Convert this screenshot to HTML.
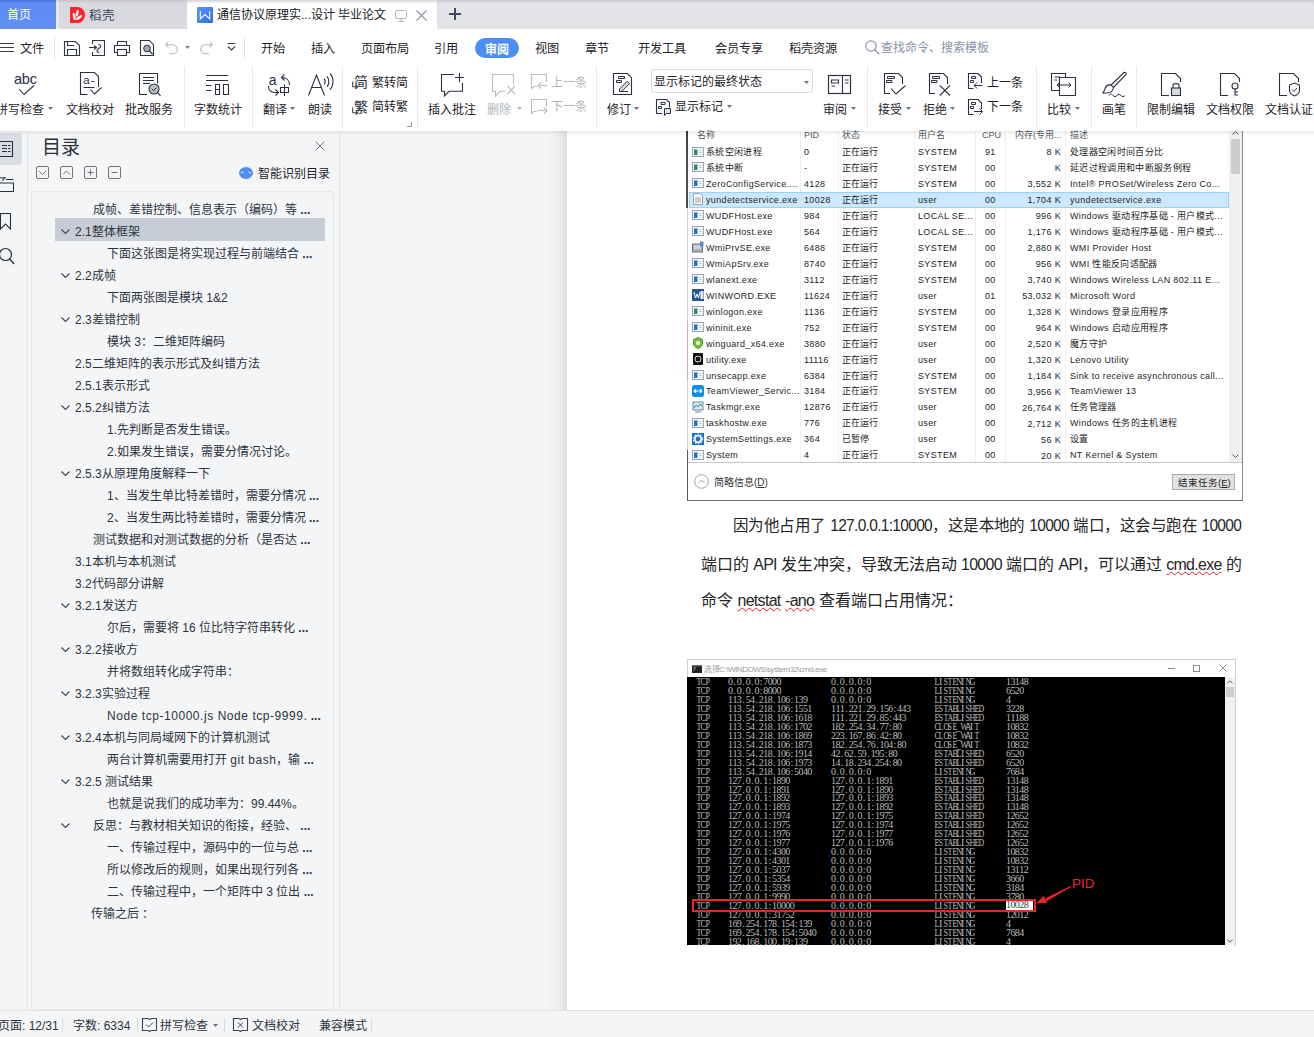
<!DOCTYPE html><html lang="zh-CN"><head><meta charset="utf-8"><style>
*{box-sizing:border-box;margin:0;padding:0}
html,body{width:1314px;height:1037px;overflow:hidden;background:#fff}
body{font-family:"Liberation Sans",sans-serif;color:#1f2329;position:relative}
.a{position:absolute;white-space:nowrap}
svg{position:absolute;overflow:visible}
</style></head><body>
<div class="a" style="left:0px;top:0px;width:1314px;height:29px;background:linear-gradient(#c8cacf,#dfe0e4 3px,#e3e4e8 6px)"></div>
<div class="a" style="left:0px;top:0px;width:56px;height:29px;background:linear-gradient(#4a74d6,#5d8af2 3px,#618ef7)"></div>
<div class="a" style="left:7px;top:6.5px;font-size:12px;line-height:17px;color:#ffffff;">首页</div>
<div class="a" style="left:56px;top:0px;width:3px;height:29px;background:linear-gradient(#d0d1d4,#e9e9eb 3px,#ebebed)"></div>
<div class="a" style="left:59px;top:0px;width:128px;height:29px;background:linear-gradient(#c3c5ca,#d7d9de 3px,#d9dbe0)"></div>
<svg style="left:70px;top:7px" width="15" height="16" viewBox="0 0 15 16"><path d="M0 0H7.5A7.5 8 0 0 1 7.5 16H0Z" fill="#fe2230"/><ellipse cx="4.2" cy="9.4" rx="1.3" ry="3.6" transform="rotate(-10 4.2 9.4)" fill="#fff"/><ellipse cx="7.2" cy="6.3" rx="1.3" ry="3.5" transform="rotate(12 7.2 6.3)" fill="#fff"/><ellipse cx="9.1" cy="10.5" rx="1.3" ry="3.6" transform="rotate(52 9.1 10.5)" fill="#fff"/></svg>
<div class="a" style="left:89px;top:6.5px;font-size:12.5px;line-height:18px;color:#3b4252;">稻壳</div>
<div class="a" style="left:187px;top:0px;width:250px;height:29px;background:linear-gradient(#d2d3d6,#f7f7f8 3px,#fff 5px)"></div>
<svg style="left:197px;top:7px" width="16" height="16" viewBox="0 0 16 16"><defs><linearGradient id="wg" x1="0" y1="0" x2="1" y2="1"><stop offset="0" stop-color="#5a93f7"/><stop offset="1" stop-color="#2f6fe8"/></linearGradient></defs><rect x="0" y="0" width="16" height="16" rx="1" fill="url(#wg)"/><path d="M3.3 4V12L8 7.6L12.7 12V4" fill="none" stroke="#fff" stroke-width="1.1"/></svg>
<div class="a" style="left:217px;top:7.0px;font-size:12px;line-height:17px;color:#16181d;">通信协议原理实...设计 毕业论文</div>
<svg style="left:395px;top:10px" width="12" height="12" viewBox="0 0 12 12"><rect x="0.5" y="0.5" width="11" height="8" rx="1.2" fill="none" stroke="#aab3c3" stroke-width="1"/><path d="M6 8.5V11M3 11.5H9" stroke="#aab3c3" stroke-width="1"/></svg>
<svg style="left:416px;top:10px" width="11" height="11" viewBox="0 0 11 11"><path d="M0.5 0.5L10.5 10.5M10.5 0.5L0.5 10.5" stroke="#8b93a3" stroke-width="1.1"/></svg>
<svg style="left:449px;top:8px" width="12" height="12" viewBox="0 0 12 12"><path d="M6 0V12M0 6H12" stroke="#3e4a61" stroke-width="2"/></svg>
<svg style="left:0px;top:43px" width="14" height="10" viewBox="0 0 14 10"><path d="M0 0.5H14M0 4.5H14M0 8.5H14" stroke="#3a4050" stroke-width="1"/></svg>
<div class="a" style="left:20px;top:40.8px;font-size:12.2px;line-height:17px;color:#1f2329;">文件</div>
<div class="a" style="left:54px;top:36px;width:1px;height:24px;background:#e2e4e8"></div>
<svg style="left:64px;top:41px" width="16" height="15" viewBox="0 0 16 15"><path d="M0.5 0.5H11.5L15.5 4.5V14.5H0.5Z" fill="none" stroke="#2f3542" stroke-width="1.1"/><path d="M3.5 14.5V8.5H12.5V14.5M3.5 0.5V4.5H10" fill="none" stroke="#2f3542" stroke-width="1.1"/></svg>
<svg style="left:89px;top:40px" width="16" height="16" viewBox="0 0 16 16"><path d="M3.5 4V0.5H15.5V15.5H3.5V12" fill="none" stroke="#2f3542" stroke-width="1.1"/><path d="M0 7.5H7M5 5.5L7.5 7.5L5 9.5M9.5 4.5C12 4.5 12.5 7 10.5 8L8.5 9.5C7 11 8.5 13 10.5 12" fill="none" stroke="#2f3542" stroke-width="1.1"/></svg>
<svg style="left:114px;top:41px" width="16" height="15" viewBox="0 0 16 15"><path d="M3.5 4V0.5H12.5V4M3.5 11.5H0.5V4.5H15.5V11.5H12.5M3.5 8.5H12.5V14.5H3.5Z" fill="none" stroke="#2f3542" stroke-width="1.1"/></svg>
<svg style="left:140px;top:40px" width="15" height="16" viewBox="0 0 15 16"><path d="M13.5 5V15.5H0.5V0.5H9.5Z" fill="none" stroke="#2f3542" stroke-width="1.1"/><circle cx="7" cy="8.5" r="3.2" fill="#a4a9b3" stroke="#2f3542" stroke-width="1.1"/><path d="M9.5 11L12.5 14" stroke="#2f3542" stroke-width="1.2"/></svg>
<svg style="left:165px;top:41px" width="13" height="13" viewBox="0 0 13 13"><path d="M3 1L0.8 3.8L3.5 6.3M1 3.8H7.5C10 3.8 12.3 6 12.3 8.5C12.3 11 10 12.8 7.5 12.8H4" fill="none" stroke="#b4b8c0" stroke-width="1.1"/></svg>
<svg style="left:185px;top:46px" width="5" height="3" viewBox="0 0 5 3"><path d="M0 0H5L2.5 3Z" fill="#7b8190"/></svg>
<svg style="left:200px;top:41px" width="13" height="13" viewBox="0 0 13 13"><path d="M10 1L12.2 3.8L9.5 6.3M12 3.8H5.5C3 3.8 0.7 6 0.7 8.5C0.7 11 3 12.8 5.5 12.8H9" fill="none" stroke="#b4b8c0" stroke-width="1.1"/></svg>
<svg style="left:227px;top:43px" width="9" height="9" viewBox="0 0 9 9"><path d="M0.5 0.5H8.5M1 3.5L4.5 7L8 3.5" fill="none" stroke="#3a4050" stroke-width="1.1"/></svg>
<div class="a" style="left:244px;top:36px;width:1px;height:24px;background:#e2e4e8"></div>
<div class="a" style="left:261px;top:40.8px;font-size:12.2px;line-height:17px;color:#1f2329;">开始</div>
<div class="a" style="left:311px;top:40.8px;font-size:12.2px;line-height:17px;color:#1f2329;">插入</div>
<div class="a" style="left:361px;top:40.8px;font-size:12.2px;line-height:17px;color:#1f2329;">页面布局</div>
<div class="a" style="left:434px;top:40.8px;font-size:12.2px;line-height:17px;color:#1f2329;">引用</div>
<div class="a" style="left:535px;top:40.8px;font-size:12.2px;line-height:17px;color:#1f2329;">视图</div>
<div class="a" style="left:585px;top:40.8px;font-size:12.2px;line-height:17px;color:#1f2329;">章节</div>
<div class="a" style="left:638px;top:40.8px;font-size:12.2px;line-height:17px;color:#1f2329;">开发工具</div>
<div class="a" style="left:715px;top:40.8px;font-size:12.2px;line-height:17px;color:#1f2329;">会员专享</div>
<div class="a" style="left:789px;top:40.8px;font-size:12.2px;line-height:17px;color:#1f2329;">稻壳资源</div>
<div class="a" style="left:475px;top:38px;width:44px;height:20px;background:#4d8ef6;border-radius:10px"></div>
<div class="a" style="left:485px;top:41.5px;font-size:12px;line-height:17px;color:#ffffff;font-weight:bold">审阅</div>
<svg style="left:865px;top:40px" width="15" height="15" viewBox="0 0 15 15"><circle cx="6" cy="6" r="5.2" fill="none" stroke="#8d96a8" stroke-width="1.2"/><path d="M9.8 9.8L14 14" stroke="#8d96a8" stroke-width="1.3"/></svg>
<div class="a" style="left:881px;top:40.0px;font-size:12px;line-height:17px;color:#8a93a5;">查找命令、搜索模板</div>
<div class="a" style="left:184px;top:66px;width:1px;height:62px;background:#e8e9ec"></div>
<div class="a" style="left:252px;top:66px;width:1px;height:62px;background:#e8e9ec"></div>
<div class="a" style="left:342px;top:66px;width:1px;height:62px;background:#e8e9ec"></div>
<div class="a" style="left:417px;top:66px;width:1px;height:62px;background:#e8e9ec"></div>
<div class="a" style="left:596px;top:66px;width:1px;height:62px;background:#e8e9ec"></div>
<div class="a" style="left:867px;top:66px;width:1px;height:62px;background:#e8e9ec"></div>
<div class="a" style="left:1036px;top:66px;width:1px;height:62px;background:#e8e9ec"></div>
<div class="a" style="left:1091px;top:66px;width:1px;height:62px;background:#e8e9ec"></div>
<div class="a" style="left:1136px;top:66px;width:1px;height:62px;background:#e8e9ec"></div>
<svg style="left:14px;top:70px" width="24" height="26" viewBox="0 0 24 26"><text x="0" y="13.8" font-family="Liberation Sans" font-size="14.5" fill="#2b3140" letter-spacing="-0.2">abc</text><path d="M5 19L10 24.5L20 15.5" fill="none" stroke="#2b3140" stroke-width="1.1"/></svg>
<div class="a" style="left:-4px;top:101.5px;font-size:12px;line-height:17px;color:#1f2329;">拼写检查</div>
<svg style="left:48px;top:106.5px" width="5" height="3" viewBox="0 0 5 3"><path d="M0 0H5L2.5 3Z" fill="#6b7280"/></svg>
<svg style="left:80px;top:72px" width="23" height="24" viewBox="0 0 23 24"><path d="M7.5 22.5H0.5V0.5H14.5L18.5 4.5V15" fill="none" stroke="#2b3140" stroke-width="1.1"/><path d="M10.5 17.5L14.5 22L21.5 15.5" fill="none" stroke="#2b3140" stroke-width="1.1"/><path d="M3.5 15.5H14.5" stroke="#2b3140" stroke-width="1"/><text x="3.2" y="12.3" font-family="Liberation Sans" font-size="11.5" fill="#2b3140">a</text><path d="M11.5 9.5H14.5" stroke="#2b3140" stroke-width="1"/></svg>
<div class="a" style="left:66px;top:101.5px;font-size:12px;line-height:17px;color:#1f2329;">文档校对</div>
<svg style="left:139px;top:73px" width="22" height="24" viewBox="0 0 22 24"><path d="M8 21.5H0.5V0.5H18.5V10.5" fill="none" stroke="#2b3140" stroke-width="1.1"/><path d="M4 4.5H15M4 7.5H15M4 10.5H11" stroke="#2b3140" stroke-width="1"/><circle cx="15" cy="16" r="5" fill="#b9bdc5" stroke="#2b3140" stroke-width="1.1"/><path d="M12.8 16L14.5 17.7L17.3 14.8" fill="none" stroke="#2b3140" stroke-width="1"/><path d="M18.7 19.7L21.5 22.8" stroke="#2b3140" stroke-width="1.2"/></svg>
<div class="a" style="left:125px;top:101.5px;font-size:12px;line-height:17px;color:#1f2329;">批改服务</div>
<svg style="left:205px;top:73px" width="25" height="23" viewBox="0 0 25 23"><path d="M1 2.5H23M1 7.5H23M1 12.5H6.5M1 17.5H6.5" stroke="#2b3140" stroke-width="1.1"/><path d="M10.5 11.5H14.5V21.5H10.5ZM10.5 16.5H14.5M18.5 11.5H23.5V21.5H18.5Z" fill="none" stroke="#2b3140" stroke-width="1.1"/></svg>
<div class="a" style="left:194px;top:101.5px;font-size:12px;line-height:17px;color:#1f2329;">字数统计</div>
<svg style="left:268px;top:73px" width="23" height="23" viewBox="0 0 23 23"><text x="0.8" y="11.5" font-family="Liberation Sans" font-size="14" fill="#2b3140">a</text><path d="M21.5 12C21.5 7.5 18.5 4.5 14 4.5M16.5 1.5L13.5 4.5L16.5 7.5" fill="none" stroke="#2b3140" stroke-width="1.1"/><path d="M0.5 13C0.5 17 3 19.5 7 19.5H10M7.5 16.5L10.5 19.5L7.5 22.5" fill="none" stroke="#2b3140" stroke-width="1.1"/><path d="M12.5 14.5H20.5V19.5H12.5ZM16.5 11.5V23" fill="none" stroke="#2b3140" stroke-width="1.1"/></svg>
<div class="a" style="left:263px;top:101.5px;font-size:12px;line-height:17px;color:#1f2329;">翻译</div>
<svg style="left:290px;top:106.5px" width="5" height="3" viewBox="0 0 5 3"><path d="M0 0H5L2.5 3Z" fill="#6b7280"/></svg>
<svg style="left:308px;top:72px" width="25" height="24" viewBox="0 0 25 24"><path d="M0.5 23.5L8.5 3L16.5 23.5M4 15.5H13" fill="none" stroke="#2b3140" stroke-width="1.1"/><path d="M16 6.5C17.5 8 17.5 11 16 12.5M19 4.5C21.5 7 21.5 12 19 14.5M22 1.5C26 5.5 26 13.5 22 17.5" fill="none" stroke="#2b3140" stroke-width="1.1"/></svg>
<div class="a" style="left:308px;top:101.5px;font-size:12px;line-height:17px;color:#1f2329;">朗读</div>
<div class="a" style="left:354px;top:71.5px;font-size:14px;line-height:20px;color:#2b3140;">简</div>
<div class="a" style="left:354px;top:96.5px;font-size:14px;line-height:20px;color:#2b3140;">繁</div>
<svg style="left:351.5px;top:80.5px" width="7" height="8" viewBox="0 0 7 8"><path d="M0.7 0.5V5.8H5.8M3.8 3.6L5.9 5.8L3.8 8" fill="none" stroke="#2b3140" stroke-width="1"/></svg>
<svg style="left:351.5px;top:106.5px" width="7" height="8" viewBox="0 0 7 8"><path d="M0.7 0.5V5.8H5.8M3.8 3.6L5.9 5.8L3.8 8" fill="none" stroke="#2b3140" stroke-width="1"/></svg>
<div class="a" style="left:372px;top:74.5px;font-size:12px;line-height:17px;color:#1f2329;">繁转简</div>
<div class="a" style="left:372px;top:99.0px;font-size:12px;line-height:17px;color:#1f2329;">简转繁</div>
<svg style="left:407px;top:122px" width="5" height="5" viewBox="0 0 5 5"><path d="M4.5 0V4.5H0" fill="none" stroke="#8a93a8" stroke-width="1"/></svg>
<svg style="left:441px;top:72px" width="24" height="25" viewBox="0 0 24 25"><path d="M12.9 2.5H0.5V19.3H3.5V24L8 19.3H21.5V11" fill="none" stroke="#2b3140" stroke-width="1.1"/><path d="M18.5 1V10M14 5.5H23" stroke="#2b3140" stroke-width="1.1"/></svg>
<div class="a" style="left:428px;top:101.5px;font-size:12px;line-height:17px;color:#1f2329;">插入批注</div>
<svg style="left:492px;top:72px" width="24" height="25" viewBox="0 0 24 25"><path d="M21.5 12V2.5H0.5V19.3H3.5V24L8 19.3H13" fill="none" stroke="#b9bcc3" stroke-width="1.1"/><path d="M15.5 14L23 22M23 14L15.5 22" stroke="#b9bcc3" stroke-width="1.1"/></svg>
<div class="a" style="left:487px;top:101.5px;font-size:12px;line-height:17px;color:#b0b4bc;">删除</div>
<svg style="left:517px;top:106.5px" width="5" height="3" viewBox="0 0 5 3"><path d="M0 0H5L2.5 3Z" fill="#b0b4bc"/></svg>
<svg style="left:531px;top:74px" width="17" height="16" viewBox="0 0 17 16"><path d="M15.5 8V0.5H0.5V14.5L3 12.5H6" fill="none" stroke="#b9bcc3" stroke-width="1.1"/><path d="M7 11.5H16M7 11.5L10 8.5M7 11.5L10 14.5" fill="none" stroke="#b9bcc3" stroke-width="1.1"/></svg>
<div class="a" style="left:551px;top:74.5px;font-size:12px;line-height:17px;color:#b0b4bc;">上一条</div>
<svg style="left:531px;top:99px" width="17" height="16" viewBox="0 0 17 16"><path d="M15.5 8V0.5H0.5V14.5L3 12.5H6" fill="none" stroke="#b9bcc3" stroke-width="1.1"/><path d="M7 11.5H16M16 11.5L13 8.5M16 11.5L13 14.5" fill="none" stroke="#b9bcc3" stroke-width="1.1"/></svg>
<div class="a" style="left:551px;top:99.0px;font-size:12px;line-height:17px;color:#b0b4bc;">下一条</div>
<svg style="left:613px;top:73px" width="20" height="23" viewBox="0 0 20 23"><path d="M0.5 21.5V0.5H14.3L18.5 4.7V21.5Z" fill="none" stroke="#2b3140" stroke-width="1.1"/><path d="M5.5 3.5H11.5V5.5H5.5ZM3.5 7.5H8.5V9.5H3.5Z" fill="none" stroke="#2b3140" stroke-width="1"/><path d="M6.5 18.5V16L14.2 8.3L16.5 10.6L8.8 18.5Z" fill="#d8dadf" stroke="#2b3140" stroke-width="1"/><path d="M8.8 18.5H15" stroke="#2b3140" stroke-width="1"/></svg>
<div class="a" style="left:607px;top:101.5px;font-size:12px;line-height:17px;color:#1f2329;">修订</div>
<svg style="left:634px;top:106.5px" width="5" height="3" viewBox="0 0 5 3"><path d="M0 0H5L2.5 3Z" fill="#6b7280"/></svg>
<div class="a" style="left:651px;top:69px;width:162px;height:24px;border:1px solid #dcdee3;border-radius:3px;background:#fff"></div>
<div class="a" style="left:654px;top:73.5px;font-size:12px;line-height:17px;color:#1f2329;">显示标记的最终状态</div>
<svg style="left:804px;top:81px" width="5" height="3" viewBox="0 0 5 3"><path d="M0 0H5L2.5 3Z" fill="#6b7280"/></svg>
<svg style="left:656px;top:99px" width="16" height="17" viewBox="0 0 16 17"><path d="M6.5 14.5H0.5V0.5H10.5L13.5 3.5V8.5" fill="none" stroke="#2b3140" stroke-width="1.1"/><path d="M5 3.5H9V5.5H5ZM2.5 7.5H5.5V9.5H2.5Z" fill="none" stroke="#2b3140" stroke-width="1"/><path d="M8.5 9.5H14.5V14.5H10.5L8.5 16.5Z" fill="#e2e4e8" stroke="#2b3140" stroke-width="1"/></svg>
<div class="a" style="left:675px;top:99.0px;font-size:12px;line-height:17px;color:#1f2329;">显示标记</div>
<svg style="left:727px;top:104.5px" width="5" height="3" viewBox="0 0 5 3"><path d="M0 0H5L2.5 3Z" fill="#6b7280"/></svg>
<svg style="left:828px;top:75px" width="23" height="19" viewBox="0 0 23 19"><rect x="0.5" y="0.5" width="22" height="18" fill="none" stroke="#2b3140" stroke-width="1.2"/><path d="M14.5 0.5V18.5M3.5 5H10.5V8H3.5ZM3.5 11H7M17 5H20.5M17 8H20.5" fill="none" stroke="#2b3140" stroke-width="1.1"/></svg>
<div class="a" style="left:823px;top:101.5px;font-size:12px;line-height:17px;color:#1f2329;">审阅</div>
<svg style="left:851px;top:106.5px" width="5" height="3" viewBox="0 0 5 3"><path d="M0 0H5L2.5 3Z" fill="#6b7280"/></svg>
<svg style="left:884px;top:73px" width="23" height="23" viewBox="0 0 23 23"><path d="M6 20.5H0.5V0.5H14.5L18.5 4.5V11" fill="none" stroke="#2b3140" stroke-width="1.1"/><path d="M3.5 3.5H10.5V5.5H3.5ZM2.5 7.5H8V9.5H2.5Z" fill="none" stroke="#2b3140" stroke-width="1"/><path d="M7 15.5L12 21L21.5 12.5" fill="none" stroke="#2b3140" stroke-width="1.1"/></svg>
<div class="a" style="left:878px;top:101.5px;font-size:12px;line-height:17px;color:#1f2329;">接受</div>
<svg style="left:906px;top:106.5px" width="5" height="3" viewBox="0 0 5 3"><path d="M0 0H5L2.5 3Z" fill="#6b7280"/></svg>
<svg style="left:929px;top:73px" width="23" height="23" viewBox="0 0 23 23"><path d="M6 20.5H0.5V0.5H14.5L18.5 4.5V11" fill="none" stroke="#2b3140" stroke-width="1.1"/><path d="M3.5 3.5H10.5V5.5H3.5ZM2.5 7.5H8V9.5H2.5Z" fill="none" stroke="#2b3140" stroke-width="1"/><path d="M10.8 12.3L21 22.5M21 12.3L10.8 22.5" fill="none" stroke="#2b3140" stroke-width="1.1"/></svg>
<div class="a" style="left:923px;top:101.5px;font-size:12px;line-height:17px;color:#1f2329;">拒绝</div>
<svg style="left:950px;top:106.5px" width="5" height="3" viewBox="0 0 5 3"><path d="M0 0H5L2.5 3Z" fill="#6b7280"/></svg>
<svg style="left:968px;top:73px" width="16" height="17" viewBox="0 0 16 17"><path d="M5.5 15.5H0.5V0.5H10L13.5 4V10" fill="none" stroke="#2b3140" stroke-width="1.1"/><path d="M3.5 3.5H7.5V5.5H3.5ZM2.5 7.5H5.5V9.5H2.5Z" fill="none" stroke="#2b3140" stroke-width="1"/><path d="M6 12.5H14.5M9 9.5L6 12.5L9 15.5" fill="none" stroke="#2b3140" stroke-width="1"/></svg>
<div class="a" style="left:987px;top:74.5px;font-size:12px;line-height:17px;color:#1f2329;">上一条</div>
<svg style="left:968px;top:99px" width="16" height="17" viewBox="0 0 16 17"><path d="M5.5 15.5H0.5V0.5H10L13.5 4V10" fill="none" stroke="#2b3140" stroke-width="1.1"/><path d="M3.5 3.5H7.5V5.5H3.5ZM2.5 7.5H5.5V9.5H2.5Z" fill="none" stroke="#2b3140" stroke-width="1"/><path d="M6 12.5H14.5M11.5 9.5L14.5 12.5L11.5 15.5" fill="none" stroke="#2b3140" stroke-width="1"/></svg>
<div class="a" style="left:987px;top:99.0px;font-size:12px;line-height:17px;color:#1f2329;">下一条</div>
<svg style="left:1051px;top:73px" width="25" height="23" viewBox="0 0 25 23"><path d="M0.5 17.5V0.5H14.5V4.5M0.5 17.5H8.5" fill="none" stroke="#2b3140" stroke-width="1.1"/><path d="M8.5 4.5H24.5V22.5H8.5Z" fill="none" stroke="#2b3140" stroke-width="1.1"/><path d="M3.5 4H9M3.5 7H6M6 12H20M6 12L8.5 9.5M6 12L8.5 14.5M20 12L17.5 9.5M20 12L17.5 14.5" fill="none" stroke="#2b3140" stroke-width="1"/></svg>
<div class="a" style="left:1047px;top:101.5px;font-size:12px;line-height:17px;color:#1f2329;">比较</div>
<svg style="left:1075px;top:106.5px" width="5" height="3" viewBox="0 0 5 3"><path d="M0 0H5L2.5 3Z" fill="#6b7280"/></svg>
<svg style="left:1102px;top:72px" width="25" height="25" viewBox="0 0 25 25"><path d="M9 13L22 0.5C23.5 0 24.5 1 24 2.5L11.5 15.5Z" fill="none" stroke="#2b3140" stroke-width="1.1"/><path d="M9 13C6 12.5 3.5 14 3 17L1 21H5C8.5 21 11 18.5 11.5 15.5" fill="none" stroke="#2b3140" stroke-width="1.1"/><path d="M7 23.5C8.5 21.5 9.5 21.5 11 23.5C12.5 25 13.5 25 15 23.5C16.5 22 17.5 22 19 23.5C20.5 25 21.5 25 23 23.5" fill="none" stroke="#2b3140" stroke-width="1"/></svg>
<div class="a" style="left:1102px;top:101.5px;font-size:12px;line-height:17px;color:#1f2329;">画笔</div>
<svg style="left:1161px;top:73px" width="20" height="23" viewBox="0 0 20 23"><path d="M8 22.5H0.5V0.5H14.5L19.5 5.5V9" fill="none" stroke="#2b3140" stroke-width="1.1"/><rect x="10.5" y="15" width="9" height="7.5" fill="#d8dadf" stroke="#2b3140" stroke-width="1.1"/><path d="M12 15V12.5C12 10 18 10 18 12.5V15" fill="none" stroke="#2b3140" stroke-width="1.1"/></svg>
<div class="a" style="left:1147px;top:101.5px;font-size:12px;line-height:17px;color:#1f2329;">限制编辑</div>
<svg style="left:1220px;top:73px" width="20" height="23" viewBox="0 0 20 23"><path d="M8 22.5H0.5V0.5H14.5L19.5 5.5V9" fill="none" stroke="#2b3140" stroke-width="1.1"/><circle cx="15" cy="13" r="3" fill="none" stroke="#2b3140" stroke-width="1.1"/><path d="M15 16V22.5M15 19H18M15 22H18" fill="none" stroke="#2b3140" stroke-width="1.1"/></svg>
<div class="a" style="left:1206px;top:101.5px;font-size:12px;line-height:17px;color:#1f2329;">文档权限</div>
<svg style="left:1279px;top:73px" width="20" height="23" viewBox="0 0 20 23"><path d="M8 22.5H0.5V0.5H14.5L19.5 5.5V9" fill="none" stroke="#2b3140" stroke-width="1.1"/><path d="M10.5 12L15.5 10L20.5 12V17C20.5 20 18 22 15.5 23C13 22 10.5 20 10.5 17Z" fill="none" stroke="#2b3140" stroke-width="1.1"/><path d="M13 16.5L15 18.5L18 15" fill="none" stroke="#2b3140" stroke-width="1"/></svg>
<div class="a" style="left:1265px;top:101.5px;font-size:12px;line-height:17px;color:#1f2329;">文档认证</div>
<div class="a" style="left:0px;top:131px;width:567px;height:879px;background:#f4f5f7"></div>
<div class="a" style="left:548px;top:131px;width:19px;height:879px;background:linear-gradient(90deg,rgba(0,0,0,0),rgba(0,0,0,0.02) 35%,rgba(0,0,0,0.05) 70%,rgba(0,0,0,0.09))"></div>
<div class="a" style="left:27px;top:131px;width:1px;height:879px;background:#e1e3e7"></div>
<div class="a" style="left:0px;top:133px;width:22px;height:32px;background:#dadde3;border-radius:0 4px 4px 0"></div>
<svg style="left:0px;top:141px" width="14" height="16" viewBox="0 0 14 16"><path d="M-2 0.5H12.5V15.5H-2" fill="none" stroke="#2b3140" stroke-width="1.1"/><path d="M2 4.5H7M8 4.5H10.5M2 7.5H7M8 7.5H10.5M2 10.5H7M8 10.5H10.5" stroke="#2b3140" stroke-width="1"/></svg>
<svg style="left:0px;top:177px" width="14" height="15" viewBox="0 0 14 15"><path d="M0 0.8H5L2.2 3.6" fill="none" stroke="#2b3140" stroke-width="1.1"/><path d="M6 2.5H13.5" stroke="#2b3140" stroke-width="1.1"/><path d="M-2 6H13.5V14.5H-2" fill="none" stroke="#2b3140" stroke-width="1.1"/></svg>
<svg style="left:0px;top:213px" width="11" height="17" viewBox="0 0 11 17"><path d="M0.5 0.5H10.5V16L5.5 11L0.5 16Z" fill="none" stroke="#2b3140" stroke-width="1.1"/></svg>
<svg style="left:0px;top:248px" width="15" height="18" viewBox="0 0 15 18"><circle cx="5.5" cy="6.5" r="6" fill="none" stroke="#2b3140" stroke-width="1.2"/><path d="M9.8 11L14 16" stroke="#2b3140" stroke-width="1.3"/></svg>
<div class="a" style="left:339px;top:131px;width:1px;height:879px;background:#e1e3e7"></div>
<div class="a" style="left:42px;top:133.5px;font-size:19px;line-height:27px;color:#2a2f3a;">目录</div>
<svg style="left:315px;top:141px" width="10" height="10" viewBox="0 0 10 10"><path d="M0.5 0.5L9.5 9.5M9.5 0.5L0.5 9.5" stroke="#6f7581" stroke-width="1"/></svg>
<svg style="left:36px;top:166px" width="13" height="13" viewBox="0 0 13 13"><rect x="0.5" y="0.5" width="12" height="12" rx="1.5" fill="none" stroke="#707379" stroke-width="1"/><path d="M3 5L6.5 8.5L10 5" fill="none" stroke="#6f7277" stroke-width="1"/></svg>
<svg style="left:60px;top:166px" width="13" height="13" viewBox="0 0 13 13"><rect x="0.5" y="0.5" width="12" height="12" rx="1.5" fill="none" stroke="#707379" stroke-width="1"/><path d="M3 8.5L6.5 5L10 8.5" fill="none" stroke="#6f7277" stroke-width="1"/></svg>
<svg style="left:84px;top:166px" width="13" height="13" viewBox="0 0 13 13"><rect x="0.5" y="0.5" width="12" height="12" rx="1.5" fill="none" stroke="#707379" stroke-width="1"/><path d="M6.5 3.5V9.5M3.5 6.5H9.5" stroke="#6f7277" stroke-width="1"/></svg>
<svg style="left:108px;top:166px" width="13" height="13" viewBox="0 0 13 13"><rect x="0.5" y="0.5" width="12" height="12" rx="1.5" fill="none" stroke="#707379" stroke-width="1"/><path d="M3.5 6.5H9.5" stroke="#6f7277" stroke-width="1"/></svg>
<svg style="left:239px;top:166px" width="14" height="14" viewBox="0 0 14 14"><ellipse cx="7" cy="7" rx="7" ry="6" fill="#4d90f2"/><path d="M1.8 7.2L3.4 5.8L4.6 6.6M9.4 5.8L10.8 7L12.2 6.2" fill="none" stroke="#fff" stroke-width="1"/></svg>
<div class="a" style="left:258px;top:166.3px;font-size:12px;line-height:17px;color:#1f2329;">智能识别目录</div>
<div class="a" style="left:31px;top:191px;width:303px;height:819px;border:1px solid #e3e5e9;border-radius:3px"></div>
<div class="a" style="left:55px;top:218px;width:270px;height:23px;background:#c7cdd6"></div>
<div class="a" style="left:93px;top:201.8px;font-size:12px;line-height:17px;color:#2c3340;">成帧、差错控制、信息表示（编码）等 <b>...</b></div>
<svg style="left:61px;top:229.0px" width="9" height="5" viewBox="0 0 9 5"><path d="M0.5 0.5L4.5 4.5L8.5 0.5" fill="none" stroke="#3d4455" stroke-width="1.1"/></svg>
<div class="a" style="left:75px;top:223.8px;font-size:12px;line-height:17px;color:#2c3340;">2.1整体框架</div>
<div class="a" style="left:107px;top:245.8px;font-size:12px;line-height:17px;color:#2c3340;">下面这张图是将实现过程与前端结合 <b>...</b></div>
<svg style="left:61px;top:273.0px" width="9" height="5" viewBox="0 0 9 5"><path d="M0.5 0.5L4.5 4.5L8.5 0.5" fill="none" stroke="#3d4455" stroke-width="1.1"/></svg>
<div class="a" style="left:75px;top:267.8px;font-size:12px;line-height:17px;color:#2c3340;">2.2成帧</div>
<div class="a" style="left:107px;top:289.8px;font-size:12px;line-height:17px;color:#2c3340;">下面两张图是模块 1&amp;2</div>
<svg style="left:61px;top:317.0px" width="9" height="5" viewBox="0 0 9 5"><path d="M0.5 0.5L4.5 4.5L8.5 0.5" fill="none" stroke="#3d4455" stroke-width="1.1"/></svg>
<div class="a" style="left:75px;top:311.8px;font-size:12px;line-height:17px;color:#2c3340;">2.3差错控制</div>
<div class="a" style="left:107px;top:333.8px;font-size:12px;line-height:17px;color:#2c3340;">模块 3：二维矩阵编码</div>
<div class="a" style="left:75px;top:355.8px;font-size:12px;line-height:17px;color:#2c3340;">2.5二维矩阵的表示形式及纠错方法</div>
<div class="a" style="left:75px;top:377.8px;font-size:12px;line-height:17px;color:#2c3340;">2.5.1表示形式</div>
<svg style="left:61px;top:405.0px" width="9" height="5" viewBox="0 0 9 5"><path d="M0.5 0.5L4.5 4.5L8.5 0.5" fill="none" stroke="#3d4455" stroke-width="1.1"/></svg>
<div class="a" style="left:75px;top:399.8px;font-size:12px;line-height:17px;color:#2c3340;">2.5.2纠错方法</div>
<div class="a" style="left:107px;top:421.8px;font-size:12px;line-height:17px;color:#2c3340;">1.先判断是否发生错误。</div>
<div class="a" style="left:107px;top:443.8px;font-size:12px;line-height:17px;color:#2c3340;">2.如果发生错误，需要分情况讨论。</div>
<svg style="left:61px;top:471.0px" width="9" height="5" viewBox="0 0 9 5"><path d="M0.5 0.5L4.5 4.5L8.5 0.5" fill="none" stroke="#3d4455" stroke-width="1.1"/></svg>
<div class="a" style="left:75px;top:465.8px;font-size:12px;line-height:17px;color:#2c3340;">2.5.3从原理角度解释一下</div>
<div class="a" style="left:107px;top:487.8px;font-size:12px;line-height:17px;color:#2c3340;">1、当发生单比特差错时，需要分情况 <b>...</b></div>
<div class="a" style="left:107px;top:509.8px;font-size:12px;line-height:17px;color:#2c3340;">2、当发生两比特差错时，需要分情况 <b>...</b></div>
<div class="a" style="left:93px;top:531.8px;font-size:12px;line-height:17px;color:#2c3340;">测试数据和对测试数据的分析（是否达 <b>...</b></div>
<div class="a" style="left:75px;top:553.8px;font-size:12px;line-height:17px;color:#2c3340;">3.1本机与本机测试</div>
<div class="a" style="left:75px;top:575.8px;font-size:12px;line-height:17px;color:#2c3340;">3.2代码部分讲解</div>
<svg style="left:61px;top:603.0px" width="9" height="5" viewBox="0 0 9 5"><path d="M0.5 0.5L4.5 4.5L8.5 0.5" fill="none" stroke="#3d4455" stroke-width="1.1"/></svg>
<div class="a" style="left:75px;top:597.8px;font-size:12px;line-height:17px;color:#2c3340;">3.2.1发送方</div>
<div class="a" style="left:107px;top:619.8px;font-size:12px;line-height:17px;color:#2c3340;">尔后，需要将 16 位比特字符串转化 <b>...</b></div>
<svg style="left:61px;top:647.0px" width="9" height="5" viewBox="0 0 9 5"><path d="M0.5 0.5L4.5 4.5L8.5 0.5" fill="none" stroke="#3d4455" stroke-width="1.1"/></svg>
<div class="a" style="left:75px;top:641.8px;font-size:12px;line-height:17px;color:#2c3340;">3.2.2接收方</div>
<div class="a" style="left:107px;top:663.8px;font-size:12px;line-height:17px;color:#2c3340;">并将数组转化成字符串：</div>
<svg style="left:61px;top:691.0px" width="9" height="5" viewBox="0 0 9 5"><path d="M0.5 0.5L4.5 4.5L8.5 0.5" fill="none" stroke="#3d4455" stroke-width="1.1"/></svg>
<div class="a" style="left:75px;top:685.8px;font-size:12px;line-height:17px;color:#2c3340;">3.2.3实验过程</div>
<div class="a" style="left:107px;top:707.8px;font-size:12px;line-height:17px;color:#2c3340;"><span style="letter-spacing:0.55px">Node tcp-10000.js Node tcp-9999.</span> <b>...</b></div>
<svg style="left:61px;top:735.0px" width="9" height="5" viewBox="0 0 9 5"><path d="M0.5 0.5L4.5 4.5L8.5 0.5" fill="none" stroke="#3d4455" stroke-width="1.1"/></svg>
<div class="a" style="left:75px;top:729.8px;font-size:12px;line-height:17px;color:#2c3340;">3.2.4本机与同局域网下的计算机测试</div>
<div class="a" style="left:107px;top:751.8px;font-size:12px;line-height:17px;color:#2c3340;">两台计算机需要用打开 <span style="letter-spacing:0.5px">git bash</span>，输 <b>...</b></div>
<svg style="left:61px;top:779.0px" width="9" height="5" viewBox="0 0 9 5"><path d="M0.5 0.5L4.5 4.5L8.5 0.5" fill="none" stroke="#3d4455" stroke-width="1.1"/></svg>
<div class="a" style="left:75px;top:773.8px;font-size:12px;line-height:17px;color:#2c3340;">3.2.5 测试结果</div>
<div class="a" style="left:107px;top:795.8px;font-size:12px;line-height:17px;color:#2c3340;">也就是说我们的成功率为：99.44%。</div>
<svg style="left:61px;top:823.0px" width="9" height="5" viewBox="0 0 9 5"><path d="M0.5 0.5L4.5 4.5L8.5 0.5" fill="none" stroke="#3d4455" stroke-width="1.1"/></svg>
<div class="a" style="left:93px;top:817.8px;font-size:12px;line-height:17px;color:#2c3340;">反思：与教材相关知识的衔接，经验、 <b>...</b></div>
<div class="a" style="left:107px;top:839.8px;font-size:12px;line-height:17px;color:#2c3340;">一、传输过程中，源码中的一位与总 <b>...</b></div>
<div class="a" style="left:107px;top:861.8px;font-size:12px;line-height:17px;color:#2c3340;">所以修改后的规则，如果出现行列各 <b>...</b></div>
<div class="a" style="left:107px;top:883.8px;font-size:12px;line-height:17px;color:#2c3340;">二、传输过程中，一个矩阵中 3 位出 <b>...</b></div>
<div class="a" style="left:91px;top:905.8px;font-size:12px;line-height:17px;color:#2c3340;">传输之后 ：</div>
<div class="a" style="left:0px;top:1010px;width:1314px;height:27px;background:#f4f5f7;border-top:1px solid #e1e3e7"></div>
<div class="a" style="left:-2px;top:1017.5px;font-size:12px;line-height:17px;color:#2c3340;">页面: 12/31</div>
<div class="a" style="left:62px;top:1018px;width:1px;height:14px;background:#d9dbe0"></div>
<div class="a" style="left:73px;top:1017.5px;font-size:12px;line-height:17px;color:#2c3340;">字数: 6334</div>
<div class="a" style="left:137px;top:1018px;width:1px;height:14px;background:#d9dbe0"></div>
<svg style="left:142px;top:1018px" width="15" height="15" viewBox="0 0 15 15"><path d="M0.5 0.5H6L7.5 1.5L9 0.5H14.5V12.5H9L7.5 13.5L6 12.5H0.5Z" fill="none" stroke="#3d4455" stroke-width="1.1"/><path d="M4 6.5L6.5 9L11 4.5" fill="none" stroke="#3d4455" stroke-width="1"/></svg>
<div class="a" style="left:160px;top:1017.5px;font-size:12px;line-height:17px;color:#2c3340;">拼写检查</div>
<svg style="left:213px;top:1024px" width="5" height="3" viewBox="0 0 5 3"><path d="M0 0H5L2.5 3Z" fill="#6b7280"/></svg>
<div class="a" style="left:224px;top:1018px;width:1px;height:14px;background:#d9dbe0"></div>
<svg style="left:233px;top:1018px" width="15" height="15" viewBox="0 0 15 15"><path d="M0.5 0.5H6L7.5 1.5L9 0.5H14.5V12.5H9L7.5 13.5L6 12.5H0.5Z" fill="none" stroke="#3d4455" stroke-width="1.1"/><path d="M5 4.5L10 9.5M10 4.5L5 9.5" fill="none" stroke="#3d4455" stroke-width="1"/></svg>
<div class="a" style="left:252px;top:1017.5px;font-size:12px;line-height:17px;color:#2c3340;">文档校对</div>
<div class="a" style="left:319px;top:1017.5px;font-size:12px;line-height:17px;color:#2c3340;">兼容模式</div>
<div class="a" style="left:371px;top:1018px;width:1px;height:14px;background:#d9dbe0"></div>
<div class="a" style="left:567px;top:131px;width:747px;height:879px;background:#fff"></div>
<div class="a" style="left:687px;top:131px;width:1px;height:370px;background:#cfcfcf"></div>
<div class="a" style="left:686px;top:131px;width:2px;height:77px;background:linear-gradient(#3c3c3c,#5a4a4c 40%,#4a4a4a)"></div>
<div class="a" style="left:687px;top:321px;width:1px;height:58px;background:#e2a4ac"></div>
<div class="a" style="left:687px;top:450px;width:1px;height:51px;background:#5a5a5a"></div>
<div class="a" style="left:1242px;top:131px;width:1px;height:370px;background:#8a8a8a"></div>
<div class="a" style="left:687px;top:500px;width:556px;height:1px;background:#6a6a6a"></div>
<div class="a" style="left:697px;top:128.8px;font-size:9px;line-height:13px;color:#555a60;">名称</div>
<div class="a" style="left:804px;top:128.8px;font-size:9px;line-height:13px;color:#555a60;">PID</div>
<div class="a" style="left:842px;top:128.8px;font-size:9px;line-height:13px;color:#555a60;">状态</div>
<div class="a" style="left:918px;top:128.8px;font-size:9px;line-height:13px;color:#555a60;">用户名</div>
<div class="a" style="left:982px;top:128.8px;font-size:9px;line-height:13px;color:#555a60;">CPU</div>
<div class="a" style="left:1015px;top:128.8px;font-size:9px;line-height:13px;color:#555a60;">内存(专用...</div>
<div class="a" style="left:1070px;top:128.8px;font-size:9px;line-height:13px;color:#555a60;">描述</div>
<div class="a" style="left:800px;top:131px;width:1px;height:332px;background:#eef0f2"></div>
<div class="a" style="left:838px;top:131px;width:1px;height:332px;background:#eef0f2"></div>
<div class="a" style="left:914px;top:131px;width:1px;height:332px;background:#eef0f2"></div>
<div class="a" style="left:975px;top:131px;width:1px;height:332px;background:#eef0f2"></div>
<div class="a" style="left:1005px;top:131px;width:1px;height:332px;background:#eef0f2"></div>
<div class="a" style="left:1065px;top:131px;width:1px;height:332px;background:#eef0f2"></div>
<div class="a" style="left:1005px;top:131px;width:1px;height:332px;background:#eef0f2"></div>
<div class="a" style="left:689px;top:192px;width:540px;height:16px;background:#cce8ff;border:1px solid #99d1ff"></div>
<svg style="left:692px;top:146.5px" width="12" height="10" viewBox="0 0 12 10"><rect x="0.5" y="0.5" width="11" height="9" fill="#f4f6f8" stroke="#9aa3ad" stroke-width="1"/><rect x="2" y="2.5" width="3.5" height="5.5" fill="#2e8b7a"/><path d="M7 3.5H10M7 5.5H10" stroke="#b9c0c8" stroke-width="0.8"/></svg>
<div class="a" style="left:706px;top:145.9px;font-size:9px;line-height:13px;color:#1e1e1e;letter-spacing:0.35px">系统空闲进程</div>
<div class="a" style="left:804px;top:145.9px;font-size:9px;line-height:13px;color:#1e1e1e;letter-spacing:0.35px">0</div>
<div class="a" style="left:842px;top:145.9px;font-size:9px;line-height:13px;color:#1e1e1e;">正在运行</div>
<div class="a" style="left:918px;top:145.9px;font-size:9px;line-height:13px;color:#1e1e1e;letter-spacing:0.35px">SYSTEM</div>
<div class="a" style="left:985px;top:145.9px;font-size:9px;line-height:13px;color:#1e1e1e;letter-spacing:0.35px">91</div>
<div class="a" style="left:990px;width:71px;text-align:right;top:145.4px;font-size:9px;line-height:14px;color:#1e1e1e;letter-spacing:0.35px">8 K</div>
<div class="a" style="left:1070px;top:145.9px;font-size:9px;line-height:13px;color:#1e1e1e;letter-spacing:0.35px">处理器空闲时间百分比</div>
<svg style="left:692px;top:162.47px" width="12" height="10" viewBox="0 0 12 10"><rect x="0.5" y="0.5" width="11" height="9" fill="#f4f6f8" stroke="#9aa3ad" stroke-width="1"/><rect x="2" y="2.5" width="3.5" height="5.5" fill="#2e8b7a"/><path d="M7 3.5H10M7 5.5H10" stroke="#b9c0c8" stroke-width="0.8"/></svg>
<div class="a" style="left:706px;top:161.9px;font-size:9px;line-height:13px;color:#1e1e1e;letter-spacing:0.35px">系统中断</div>
<div class="a" style="left:804px;top:161.9px;font-size:9px;line-height:13px;color:#1e1e1e;letter-spacing:0.35px">-</div>
<div class="a" style="left:842px;top:161.9px;font-size:9px;line-height:13px;color:#1e1e1e;">正在运行</div>
<div class="a" style="left:918px;top:161.9px;font-size:9px;line-height:13px;color:#1e1e1e;letter-spacing:0.35px">SYSTEM</div>
<div class="a" style="left:985px;top:161.9px;font-size:9px;line-height:13px;color:#1e1e1e;letter-spacing:0.35px">00</div>
<div class="a" style="left:990px;width:71px;text-align:right;top:161.4px;font-size:9px;line-height:14px;color:#1e1e1e;letter-spacing:0.35px">K</div>
<div class="a" style="left:1070px;top:161.9px;font-size:9px;line-height:13px;color:#1e1e1e;letter-spacing:0.35px">延迟过程调用和中断服务例程</div>
<svg style="left:692px;top:178.44px" width="12" height="10" viewBox="0 0 12 10"><rect x="0.5" y="0.5" width="11" height="9" fill="#f4f6f8" stroke="#9aa3ad" stroke-width="1"/><rect x="2" y="2.5" width="3.5" height="5.5" fill="#1a73c8"/><path d="M7 3.5H10M7 5.5H10" stroke="#b9c0c8" stroke-width="0.8"/></svg>
<div class="a" style="left:706px;top:177.8px;font-size:9px;line-height:13px;color:#1e1e1e;letter-spacing:0.35px">ZeroConfigService....</div>
<div class="a" style="left:804px;top:177.8px;font-size:9px;line-height:13px;color:#1e1e1e;letter-spacing:0.35px">4128</div>
<div class="a" style="left:842px;top:177.8px;font-size:9px;line-height:13px;color:#1e1e1e;">正在运行</div>
<div class="a" style="left:918px;top:177.8px;font-size:9px;line-height:13px;color:#1e1e1e;letter-spacing:0.35px">SYSTEM</div>
<div class="a" style="left:985px;top:177.8px;font-size:9px;line-height:13px;color:#1e1e1e;letter-spacing:0.35px">00</div>
<div class="a" style="left:990px;width:71px;text-align:right;top:177.3px;font-size:9px;line-height:14px;color:#1e1e1e;letter-spacing:0.35px">3,552 K</div>
<div class="a" style="left:1070px;top:177.8px;font-size:9px;line-height:13px;color:#1e1e1e;letter-spacing:0.35px">Intel® PROSet/Wireless Zero Co...</div>
<svg style="left:693px;top:193.41px" width="10" height="12" viewBox="0 0 10 12"><path d="M0.5 0.5H7L9.5 3V11.5H0.5Z" fill="#fff" stroke="#9aa3ad"/><path d="M2 5H8M2 7H8M2 9H8" stroke="#7a8a9a" stroke-width="0.8"/></svg>
<div class="a" style="left:706px;top:193.8px;font-size:9px;line-height:13px;color:#1e1e1e;letter-spacing:0.35px">yundetectservice.exe</div>
<div class="a" style="left:804px;top:193.8px;font-size:9px;line-height:13px;color:#1e1e1e;letter-spacing:0.35px">10028</div>
<div class="a" style="left:842px;top:193.8px;font-size:9px;line-height:13px;color:#1e1e1e;">正在运行</div>
<div class="a" style="left:918px;top:193.8px;font-size:9px;line-height:13px;color:#1e1e1e;letter-spacing:0.35px">user</div>
<div class="a" style="left:985px;top:193.8px;font-size:9px;line-height:13px;color:#1e1e1e;letter-spacing:0.35px">00</div>
<div class="a" style="left:990px;width:71px;text-align:right;top:193.3px;font-size:9px;line-height:14px;color:#1e1e1e;letter-spacing:0.35px">1,704 K</div>
<div class="a" style="left:1070px;top:193.8px;font-size:9px;line-height:13px;color:#1e1e1e;letter-spacing:0.35px">yundetectservice.exe</div>
<svg style="left:692px;top:210.38px" width="12" height="10" viewBox="0 0 12 10"><rect x="0.5" y="0.5" width="11" height="9" fill="#f4f6f8" stroke="#9aa3ad" stroke-width="1"/><rect x="2" y="2.5" width="3.5" height="5.5" fill="#1a73c8"/><path d="M7 3.5H10M7 5.5H10" stroke="#b9c0c8" stroke-width="0.8"/></svg>
<div class="a" style="left:706px;top:209.8px;font-size:9px;line-height:13px;color:#1e1e1e;letter-spacing:0.35px">WUDFHost.exe</div>
<div class="a" style="left:804px;top:209.8px;font-size:9px;line-height:13px;color:#1e1e1e;letter-spacing:0.35px">984</div>
<div class="a" style="left:842px;top:209.8px;font-size:9px;line-height:13px;color:#1e1e1e;">正在运行</div>
<div class="a" style="left:918px;top:209.8px;font-size:9px;line-height:13px;color:#1e1e1e;letter-spacing:0.35px">LOCAL SE...</div>
<div class="a" style="left:985px;top:209.8px;font-size:9px;line-height:13px;color:#1e1e1e;letter-spacing:0.35px">00</div>
<div class="a" style="left:990px;width:71px;text-align:right;top:209.3px;font-size:9px;line-height:14px;color:#1e1e1e;letter-spacing:0.35px">996 K</div>
<div class="a" style="left:1070px;top:209.8px;font-size:9px;line-height:13px;color:#1e1e1e;letter-spacing:0.35px">Windows 驱动程序基础 - 用户模式...</div>
<svg style="left:692px;top:226.35000000000002px" width="12" height="10" viewBox="0 0 12 10"><rect x="0.5" y="0.5" width="11" height="9" fill="#f4f6f8" stroke="#9aa3ad" stroke-width="1"/><rect x="2" y="2.5" width="3.5" height="5.5" fill="#1a73c8"/><path d="M7 3.5H10M7 5.5H10" stroke="#b9c0c8" stroke-width="0.8"/></svg>
<div class="a" style="left:706px;top:225.8px;font-size:9px;line-height:13px;color:#1e1e1e;letter-spacing:0.35px">WUDFHost.exe</div>
<div class="a" style="left:804px;top:225.8px;font-size:9px;line-height:13px;color:#1e1e1e;letter-spacing:0.35px">564</div>
<div class="a" style="left:842px;top:225.8px;font-size:9px;line-height:13px;color:#1e1e1e;">正在运行</div>
<div class="a" style="left:918px;top:225.8px;font-size:9px;line-height:13px;color:#1e1e1e;letter-spacing:0.35px">LOCAL SE...</div>
<div class="a" style="left:985px;top:225.8px;font-size:9px;line-height:13px;color:#1e1e1e;letter-spacing:0.35px">00</div>
<div class="a" style="left:990px;width:71px;text-align:right;top:225.3px;font-size:9px;line-height:14px;color:#1e1e1e;letter-spacing:0.35px">1,176 K</div>
<div class="a" style="left:1070px;top:225.8px;font-size:9px;line-height:13px;color:#1e1e1e;letter-spacing:0.35px">Windows 驱动程序基础 - 用户模式...</div>
<svg style="left:692px;top:241.32px" width="12" height="12" viewBox="0 0 12 12"><rect x="0.5" y="3" width="10" height="8" fill="#aab4c0" stroke="#6a7480"/><path d="M2 5H9M2 7H9" stroke="#fff" stroke-width="0.8"/><rect x="8" y="0.5" width="3.5" height="5" fill="#5a8ac0"/></svg>
<div class="a" style="left:706px;top:241.7px;font-size:9px;line-height:13px;color:#1e1e1e;letter-spacing:0.35px">WmiPrvSE.exe</div>
<div class="a" style="left:804px;top:241.7px;font-size:9px;line-height:13px;color:#1e1e1e;letter-spacing:0.35px">6488</div>
<div class="a" style="left:842px;top:241.7px;font-size:9px;line-height:13px;color:#1e1e1e;">正在运行</div>
<div class="a" style="left:918px;top:241.7px;font-size:9px;line-height:13px;color:#1e1e1e;letter-spacing:0.35px">SYSTEM</div>
<div class="a" style="left:985px;top:241.7px;font-size:9px;line-height:13px;color:#1e1e1e;letter-spacing:0.35px">00</div>
<div class="a" style="left:990px;width:71px;text-align:right;top:241.2px;font-size:9px;line-height:14px;color:#1e1e1e;letter-spacing:0.35px">2,880 K</div>
<div class="a" style="left:1070px;top:241.7px;font-size:9px;line-height:13px;color:#1e1e1e;letter-spacing:0.35px">WMI Provider Host</div>
<svg style="left:692px;top:258.29px" width="12" height="10" viewBox="0 0 12 10"><rect x="0.5" y="0.5" width="11" height="9" fill="#f4f6f8" stroke="#9aa3ad" stroke-width="1"/><rect x="2" y="2.5" width="3.5" height="5.5" fill="#1a73c8"/><path d="M7 3.5H10M7 5.5H10" stroke="#b9c0c8" stroke-width="0.8"/></svg>
<div class="a" style="left:706px;top:257.7px;font-size:9px;line-height:13px;color:#1e1e1e;letter-spacing:0.35px">WmiApSrv.exe</div>
<div class="a" style="left:804px;top:257.7px;font-size:9px;line-height:13px;color:#1e1e1e;letter-spacing:0.35px">8740</div>
<div class="a" style="left:842px;top:257.7px;font-size:9px;line-height:13px;color:#1e1e1e;">正在运行</div>
<div class="a" style="left:918px;top:257.7px;font-size:9px;line-height:13px;color:#1e1e1e;letter-spacing:0.35px">SYSTEM</div>
<div class="a" style="left:985px;top:257.7px;font-size:9px;line-height:13px;color:#1e1e1e;letter-spacing:0.35px">00</div>
<div class="a" style="left:990px;width:71px;text-align:right;top:257.2px;font-size:9px;line-height:14px;color:#1e1e1e;letter-spacing:0.35px">956 K</div>
<div class="a" style="left:1070px;top:257.7px;font-size:9px;line-height:13px;color:#1e1e1e;letter-spacing:0.35px">WMI 性能反向适配器</div>
<svg style="left:692px;top:274.26px" width="12" height="10" viewBox="0 0 12 10"><rect x="0.5" y="0.5" width="11" height="9" fill="#f4f6f8" stroke="#9aa3ad" stroke-width="1"/><rect x="2" y="2.5" width="3.5" height="5.5" fill="#1a73c8"/><path d="M7 3.5H10M7 5.5H10" stroke="#b9c0c8" stroke-width="0.8"/></svg>
<div class="a" style="left:706px;top:273.7px;font-size:9px;line-height:13px;color:#1e1e1e;letter-spacing:0.35px">wlanext.exe</div>
<div class="a" style="left:804px;top:273.7px;font-size:9px;line-height:13px;color:#1e1e1e;letter-spacing:0.35px">3112</div>
<div class="a" style="left:842px;top:273.7px;font-size:9px;line-height:13px;color:#1e1e1e;">正在运行</div>
<div class="a" style="left:918px;top:273.7px;font-size:9px;line-height:13px;color:#1e1e1e;letter-spacing:0.35px">SYSTEM</div>
<div class="a" style="left:985px;top:273.7px;font-size:9px;line-height:13px;color:#1e1e1e;letter-spacing:0.35px">00</div>
<div class="a" style="left:990px;width:71px;text-align:right;top:273.2px;font-size:9px;line-height:14px;color:#1e1e1e;letter-spacing:0.35px">3,740 K</div>
<div class="a" style="left:1070px;top:273.7px;font-size:9px;line-height:13px;color:#1e1e1e;letter-spacing:0.35px">Windows Wireless LAN 802.11 E...</div>
<svg style="left:692px;top:289.23px" width="12" height="12" viewBox="0 0 12 12"><rect x="0" y="0" width="12" height="12" fill="#2b579a"/><path d="M2 3L3.5 9L5 5L6.5 9L8 3" fill="none" stroke="#fff" stroke-width="1"/><rect x="8.5" y="2" width="3" height="8" fill="#e8eef8"/></svg>
<div class="a" style="left:706px;top:289.6px;font-size:9px;line-height:13px;color:#1e1e1e;letter-spacing:0.35px">WINWORD.EXE</div>
<div class="a" style="left:804px;top:289.6px;font-size:9px;line-height:13px;color:#1e1e1e;letter-spacing:0.35px">11624</div>
<div class="a" style="left:842px;top:289.6px;font-size:9px;line-height:13px;color:#1e1e1e;">正在运行</div>
<div class="a" style="left:918px;top:289.6px;font-size:9px;line-height:13px;color:#1e1e1e;letter-spacing:0.35px">user</div>
<div class="a" style="left:985px;top:289.6px;font-size:9px;line-height:13px;color:#1e1e1e;letter-spacing:0.35px">01</div>
<div class="a" style="left:990px;width:71px;text-align:right;top:289.1px;font-size:9px;line-height:14px;color:#1e1e1e;letter-spacing:0.35px">53,032 K</div>
<div class="a" style="left:1070px;top:289.6px;font-size:9px;line-height:13px;color:#1e1e1e;letter-spacing:0.35px">Microsoft Word</div>
<svg style="left:692px;top:306.20000000000005px" width="12" height="10" viewBox="0 0 12 10"><rect x="0.5" y="0.5" width="11" height="9" fill="#f4f6f8" stroke="#9aa3ad" stroke-width="1"/><rect x="2" y="2.5" width="3.5" height="5.5" fill="#2e8b7a"/><path d="M7 3.5H10M7 5.5H10" stroke="#b9c0c8" stroke-width="0.8"/></svg>
<div class="a" style="left:706px;top:305.6px;font-size:9px;line-height:13px;color:#1e1e1e;letter-spacing:0.35px">winlogon.exe</div>
<div class="a" style="left:804px;top:305.6px;font-size:9px;line-height:13px;color:#1e1e1e;letter-spacing:0.35px">1136</div>
<div class="a" style="left:842px;top:305.6px;font-size:9px;line-height:13px;color:#1e1e1e;">正在运行</div>
<div class="a" style="left:918px;top:305.6px;font-size:9px;line-height:13px;color:#1e1e1e;letter-spacing:0.35px">SYSTEM</div>
<div class="a" style="left:985px;top:305.6px;font-size:9px;line-height:13px;color:#1e1e1e;letter-spacing:0.35px">00</div>
<div class="a" style="left:990px;width:71px;text-align:right;top:305.1px;font-size:9px;line-height:14px;color:#1e1e1e;letter-spacing:0.35px">1,328 K</div>
<div class="a" style="left:1070px;top:305.6px;font-size:9px;line-height:13px;color:#1e1e1e;letter-spacing:0.35px">Windows 登录应用程序</div>
<svg style="left:692px;top:322.17px" width="12" height="10" viewBox="0 0 12 10"><rect x="0.5" y="0.5" width="11" height="9" fill="#f4f6f8" stroke="#9aa3ad" stroke-width="1"/><rect x="2" y="2.5" width="3.5" height="5.5" fill="#1a73c8"/><path d="M7 3.5H10M7 5.5H10" stroke="#b9c0c8" stroke-width="0.8"/></svg>
<div class="a" style="left:706px;top:321.6px;font-size:9px;line-height:13px;color:#1e1e1e;letter-spacing:0.35px">wininit.exe</div>
<div class="a" style="left:804px;top:321.6px;font-size:9px;line-height:13px;color:#1e1e1e;letter-spacing:0.35px">752</div>
<div class="a" style="left:842px;top:321.6px;font-size:9px;line-height:13px;color:#1e1e1e;">正在运行</div>
<div class="a" style="left:918px;top:321.6px;font-size:9px;line-height:13px;color:#1e1e1e;letter-spacing:0.35px">SYSTEM</div>
<div class="a" style="left:985px;top:321.6px;font-size:9px;line-height:13px;color:#1e1e1e;letter-spacing:0.35px">00</div>
<div class="a" style="left:990px;width:71px;text-align:right;top:321.1px;font-size:9px;line-height:14px;color:#1e1e1e;letter-spacing:0.35px">964 K</div>
<div class="a" style="left:1070px;top:321.6px;font-size:9px;line-height:13px;color:#1e1e1e;letter-spacing:0.35px">Windows 启动应用程序</div>
<svg style="left:693px;top:337.14px" width="10" height="12" viewBox="0 0 10 12"><path d="M5 0.5L9.5 2.5V6C9.5 9 7.5 10.5 5 11.5C2.5 10.5 0.5 9 0.5 6V2.5Z" fill="#6fbf3a" stroke="#4a9a20"/><circle cx="5" cy="6" r="2" fill="#fff"/></svg>
<div class="a" style="left:706px;top:337.5px;font-size:9px;line-height:13px;color:#1e1e1e;letter-spacing:0.35px">winguard_x64.exe</div>
<div class="a" style="left:804px;top:337.5px;font-size:9px;line-height:13px;color:#1e1e1e;letter-spacing:0.35px">3880</div>
<div class="a" style="left:842px;top:337.5px;font-size:9px;line-height:13px;color:#1e1e1e;">正在运行</div>
<div class="a" style="left:918px;top:337.5px;font-size:9px;line-height:13px;color:#1e1e1e;letter-spacing:0.35px">user</div>
<div class="a" style="left:985px;top:337.5px;font-size:9px;line-height:13px;color:#1e1e1e;letter-spacing:0.35px">00</div>
<div class="a" style="left:990px;width:71px;text-align:right;top:337.0px;font-size:9px;line-height:14px;color:#1e1e1e;letter-spacing:0.35px">2,520 K</div>
<div class="a" style="left:1070px;top:337.5px;font-size:9px;line-height:13px;color:#1e1e1e;letter-spacing:0.35px">魔方守护</div>
<svg style="left:693px;top:353.11px" width="10" height="12" viewBox="0 0 10 12"><rect x="0" y="0" width="10" height="12" rx="1" fill="#111"/><circle cx="5" cy="6" r="3" fill="none" stroke="#ddd" stroke-width="1"/></svg>
<div class="a" style="left:706px;top:353.5px;font-size:9px;line-height:13px;color:#1e1e1e;letter-spacing:0.35px">utility.exe</div>
<div class="a" style="left:804px;top:353.5px;font-size:9px;line-height:13px;color:#1e1e1e;letter-spacing:0.35px">11116</div>
<div class="a" style="left:842px;top:353.5px;font-size:9px;line-height:13px;color:#1e1e1e;">正在运行</div>
<div class="a" style="left:918px;top:353.5px;font-size:9px;line-height:13px;color:#1e1e1e;letter-spacing:0.35px">user</div>
<div class="a" style="left:985px;top:353.5px;font-size:9px;line-height:13px;color:#1e1e1e;letter-spacing:0.35px">00</div>
<div class="a" style="left:990px;width:71px;text-align:right;top:353.0px;font-size:9px;line-height:14px;color:#1e1e1e;letter-spacing:0.35px">1,320 K</div>
<div class="a" style="left:1070px;top:353.5px;font-size:9px;line-height:13px;color:#1e1e1e;letter-spacing:0.35px">Lenovo Utility</div>
<svg style="left:692px;top:370.08000000000004px" width="12" height="10" viewBox="0 0 12 10"><rect x="0.5" y="0.5" width="11" height="9" fill="#f4f6f8" stroke="#9aa3ad" stroke-width="1"/><rect x="2" y="2.5" width="3.5" height="5.5" fill="#1a73c8"/><path d="M7 3.5H10M7 5.5H10" stroke="#b9c0c8" stroke-width="0.8"/></svg>
<div class="a" style="left:706px;top:369.5px;font-size:9px;line-height:13px;color:#1e1e1e;letter-spacing:0.35px">unsecapp.exe</div>
<div class="a" style="left:804px;top:369.5px;font-size:9px;line-height:13px;color:#1e1e1e;letter-spacing:0.35px">6384</div>
<div class="a" style="left:842px;top:369.5px;font-size:9px;line-height:13px;color:#1e1e1e;">正在运行</div>
<div class="a" style="left:918px;top:369.5px;font-size:9px;line-height:13px;color:#1e1e1e;letter-spacing:0.35px">SYSTEM</div>
<div class="a" style="left:985px;top:369.5px;font-size:9px;line-height:13px;color:#1e1e1e;letter-spacing:0.35px">00</div>
<div class="a" style="left:990px;width:71px;text-align:right;top:369.0px;font-size:9px;line-height:14px;color:#1e1e1e;letter-spacing:0.35px">1,184 K</div>
<div class="a" style="left:1070px;top:369.5px;font-size:9px;line-height:13px;color:#1e1e1e;letter-spacing:0.35px">Sink to receive asynchronous call...</div>
<svg style="left:692px;top:385.05px" width="12" height="12" viewBox="0 0 12 12"><rect x="0" y="0" width="12" height="12" rx="2.5" fill="#0e8ee9"/><path d="M2 6H10M2 6L4 4.2M2 6L4 7.8M10 6L8 4.2M10 6L8 7.8" fill="none" stroke="#fff" stroke-width="1.2"/></svg>
<div class="a" style="left:706px;top:385.4px;font-size:9px;line-height:13px;color:#1e1e1e;letter-spacing:0.35px">TeamViewer_Servic...</div>
<div class="a" style="left:804px;top:385.4px;font-size:9px;line-height:13px;color:#1e1e1e;letter-spacing:0.35px">3184</div>
<div class="a" style="left:842px;top:385.4px;font-size:9px;line-height:13px;color:#1e1e1e;">正在运行</div>
<div class="a" style="left:918px;top:385.4px;font-size:9px;line-height:13px;color:#1e1e1e;letter-spacing:0.35px">SYSTEM</div>
<div class="a" style="left:985px;top:385.4px;font-size:9px;line-height:13px;color:#1e1e1e;letter-spacing:0.35px">00</div>
<div class="a" style="left:990px;width:71px;text-align:right;top:384.9px;font-size:9px;line-height:14px;color:#1e1e1e;letter-spacing:0.35px">3,956 K</div>
<div class="a" style="left:1070px;top:385.4px;font-size:9px;line-height:13px;color:#1e1e1e;letter-spacing:0.35px">TeamViewer 13</div>
<svg style="left:692px;top:401.02px" width="12" height="12" viewBox="0 0 12 12"><rect x="1" y="1" width="10" height="8" fill="#d8e8f0" stroke="#6a8aa0"/><path d="M2 7L4 4L6 6L8 3L10 5" fill="none" stroke="#2a8ac0" stroke-width="1"/><path d="M3 11H9" stroke="#6a8aa0"/></svg>
<div class="a" style="left:706px;top:401.4px;font-size:9px;line-height:13px;color:#1e1e1e;letter-spacing:0.35px">Taskmgr.exe</div>
<div class="a" style="left:804px;top:401.4px;font-size:9px;line-height:13px;color:#1e1e1e;letter-spacing:0.35px">12876</div>
<div class="a" style="left:842px;top:401.4px;font-size:9px;line-height:13px;color:#1e1e1e;">正在运行</div>
<div class="a" style="left:918px;top:401.4px;font-size:9px;line-height:13px;color:#1e1e1e;letter-spacing:0.35px">user</div>
<div class="a" style="left:985px;top:401.4px;font-size:9px;line-height:13px;color:#1e1e1e;letter-spacing:0.35px">00</div>
<div class="a" style="left:990px;width:71px;text-align:right;top:400.9px;font-size:9px;line-height:14px;color:#1e1e1e;letter-spacing:0.35px">26,764 K</div>
<div class="a" style="left:1070px;top:401.4px;font-size:9px;line-height:13px;color:#1e1e1e;letter-spacing:0.35px">任务管理器</div>
<svg style="left:692px;top:417.99px" width="12" height="10" viewBox="0 0 12 10"><rect x="0.5" y="0.5" width="11" height="9" fill="#f4f6f8" stroke="#9aa3ad" stroke-width="1"/><rect x="2" y="2.5" width="3.5" height="5.5" fill="#1a73c8"/><path d="M7 3.5H10M7 5.5H10" stroke="#b9c0c8" stroke-width="0.8"/></svg>
<div class="a" style="left:706px;top:417.4px;font-size:9px;line-height:13px;color:#1e1e1e;letter-spacing:0.35px">taskhostw.exe</div>
<div class="a" style="left:804px;top:417.4px;font-size:9px;line-height:13px;color:#1e1e1e;letter-spacing:0.35px">776</div>
<div class="a" style="left:842px;top:417.4px;font-size:9px;line-height:13px;color:#1e1e1e;">正在运行</div>
<div class="a" style="left:918px;top:417.4px;font-size:9px;line-height:13px;color:#1e1e1e;letter-spacing:0.35px">user</div>
<div class="a" style="left:985px;top:417.4px;font-size:9px;line-height:13px;color:#1e1e1e;letter-spacing:0.35px">00</div>
<div class="a" style="left:990px;width:71px;text-align:right;top:416.9px;font-size:9px;line-height:14px;color:#1e1e1e;letter-spacing:0.35px">2,712 K</div>
<div class="a" style="left:1070px;top:417.4px;font-size:9px;line-height:13px;color:#1e1e1e;letter-spacing:0.35px">Windows 任务的主机进程</div>
<svg style="left:692px;top:432.96000000000004px" width="12" height="12" viewBox="0 0 12 12"><rect x="0" y="0" width="12" height="12" fill="#1a6fd0"/><circle cx="6" cy="6" r="3.2" fill="none" stroke="#fff" stroke-width="1.6"/><circle cx="6" cy="6" r="4.6" fill="none" stroke="#fff" stroke-width="1.2" stroke-dasharray="1.5 1.4"/></svg>
<div class="a" style="left:706px;top:433.4px;font-size:9px;line-height:13px;color:#1e1e1e;letter-spacing:0.35px">SystemSettings.exe</div>
<div class="a" style="left:804px;top:433.4px;font-size:9px;line-height:13px;color:#1e1e1e;letter-spacing:0.35px">364</div>
<div class="a" style="left:842px;top:433.4px;font-size:9px;line-height:13px;color:#1e1e1e;">已暂停</div>
<div class="a" style="left:918px;top:433.4px;font-size:9px;line-height:13px;color:#1e1e1e;letter-spacing:0.35px">user</div>
<div class="a" style="left:985px;top:433.4px;font-size:9px;line-height:13px;color:#1e1e1e;letter-spacing:0.35px">00</div>
<div class="a" style="left:990px;width:71px;text-align:right;top:432.9px;font-size:9px;line-height:14px;color:#1e1e1e;letter-spacing:0.35px">56 K</div>
<div class="a" style="left:1070px;top:433.4px;font-size:9px;line-height:13px;color:#1e1e1e;letter-spacing:0.35px">设置</div>
<svg style="left:692px;top:449.93px" width="12" height="10" viewBox="0 0 12 10"><rect x="0.5" y="0.5" width="11" height="9" fill="#f4f6f8" stroke="#9aa3ad" stroke-width="1"/><rect x="2" y="2.5" width="3.5" height="5.5" fill="#1a73c8"/><path d="M7 3.5H10M7 5.5H10" stroke="#b9c0c8" stroke-width="0.8"/></svg>
<div class="a" style="left:706px;top:449.3px;font-size:9px;line-height:13px;color:#1e1e1e;letter-spacing:0.35px">System</div>
<div class="a" style="left:804px;top:449.3px;font-size:9px;line-height:13px;color:#1e1e1e;letter-spacing:0.35px">4</div>
<div class="a" style="left:842px;top:449.3px;font-size:9px;line-height:13px;color:#1e1e1e;">正在运行</div>
<div class="a" style="left:918px;top:449.3px;font-size:9px;line-height:13px;color:#1e1e1e;letter-spacing:0.35px">SYSTEM</div>
<div class="a" style="left:985px;top:449.3px;font-size:9px;line-height:13px;color:#1e1e1e;letter-spacing:0.35px">00</div>
<div class="a" style="left:990px;width:71px;text-align:right;top:448.8px;font-size:9px;line-height:14px;color:#1e1e1e;letter-spacing:0.35px">20 K</div>
<div class="a" style="left:1070px;top:449.3px;font-size:9px;line-height:13px;color:#1e1e1e;letter-spacing:0.35px">NT Kernel &amp; System</div>
<div class="a" style="left:1229px;top:131px;width:13px;height:332px;background:#f0f0f0"></div>
<div class="a" style="left:1231px;top:139px;width:9px;height:35px;background:#cdcdcd"></div>
<svg style="left:1232px;top:131px" width="7" height="4" viewBox="0 0 7 4"><path d="M0.5 3.5L3.5 0.5L6.5 3.5" fill="none" stroke="#606060" stroke-width="1"/></svg>
<svg style="left:1232px;top:454px" width="7" height="4" viewBox="0 0 7 4"><path d="M0.5 0.5L3.5 3.5L6.5 0.5" fill="none" stroke="#606060" stroke-width="1"/></svg>
<div class="a" style="left:688px;top:462px;width:554px;height:1px;background:#c8c8c8"></div>
<svg style="left:694px;top:474px" width="15" height="15" viewBox="0 0 15 15"><circle cx="7.5" cy="7.5" r="6.8" fill="none" stroke="#9a9a9a" stroke-width="0.9"/><path d="M4.5 9L7.5 6L10.5 9" fill="none" stroke="#9a9a9a" stroke-width="0.9"/></svg>
<div class="a" style="left:714px;top:475.5px;font-size:10px;line-height:14px;color:#333;">简略信息(<u>D</u>)</div>
<div class="a" style="left:1172px;top:474px;width:63px;height:16px;background:#e1e1e1;border:1px solid #adadad"></div>
<div class="a" style="left:1178px;top:476.0px;font-size:9.5px;line-height:13px;color:#222;">结束任务(<u>E</u>)</div>
<style>.sq{text-decoration:underline wavy #e02020;text-decoration-thickness:1px;text-underline-offset:1px}</style>
<div class="a" style="left:733px;top:515px;font-size:16px;line-height:22px;color:#262626;white-space:pre;transform:scaleX(0.968);transform-origin:0 0">因为他占用了 <span style="letter-spacing:-0.7px">127.0.0.1:10000</span>，这是本地的 <span style="letter-spacing:-0.7px">10000</span> 端口，这会与跑在 <span style="letter-spacing:-0.7px">10000</span></div>
<div class="a" style="left:701px;top:553.5px;font-size:16px;line-height:22px;color:#262626;white-space:pre;transform:scaleX(0.996);transform-origin:0 0">端口的 <span style="letter-spacing:-0.7px">API</span> 发生冲突，导致无法启动 <span style="letter-spacing:-0.7px">10000</span> 端口的 <span style="letter-spacing:-0.7px">API</span>，可以通过 <span class="sq"><span style="letter-spacing:-0.7px">cmd.exe</span></span> 的</div>
<div class="a" style="left:701px;top:590px;font-size:16px;line-height:22px;color:#262626;white-space:pre;transform:scaleX(1.0);transform-origin:0 0">命令 <span class="sq"><span style="letter-spacing:-0.7px">netstat</span></span> <span class="sq"><span style="letter-spacing:-0.7px">-ano</span></span> 查看端口占用情况：</div>
<div class="a" style="left:687px;top:659px;width:549px;height:287px;background:#fff;border:1px solid #cfcfcf;border-bottom:none"></div>
<svg style="left:692px;top:665px" width="10" height="8" viewBox="0 0 10 8"><rect x="0" y="0" width="10" height="8" fill="#222"/><rect x="0" y="0" width="10" height="1.5" fill="#666"/><path d="M1.5 3H4M1.5 5H3" stroke="#ccc" stroke-width="0.8"/></svg>
<div class="a" style="left:704px;top:664.0px;font-size:8px;line-height:11px;color:#9a9a9a;letter-spacing:-0.45px">选择C:\WINDOWS\system32\cmd.exe</div>
<div class="a" style="left:1168px;top:668px;width:7px;height:1px;background:#888"></div>
<div class="a" style="left:1193px;top:665px;width:7px;height:7px;border:1px solid #888"></div>
<svg style="left:1219px;top:664px" width="8" height="8" viewBox="0 0 8 8"><path d="M0.5 0.5L7.5 7.5M7.5 0.5L0.5 7.5" stroke="#888" stroke-width="0.9"/></svg>
<div class="a" style="left:687px;top:677px;width:538px;height:268px;background:#000"></div>
<div class="a" style="left:1225px;top:677px;width:10px;height:268px;background:#f0f0f0"></div>
<div class="a" style="left:1226px;top:687px;width:8px;height:10px;background:#cdcdcd"></div>
<svg style="left:1227px;top:680px" width="6" height="4" viewBox="0 0 6 4"><path d="M0.5 3.5L3 0.8L5.5 3.5" fill="none" stroke="#555" stroke-width="0.9"/></svg>
<svg style="left:1227px;top:939px" width="6" height="4" viewBox="0 0 6 4"><path d="M0.5 0.5L3 3.2L5.5 0.5" fill="none" stroke="#555" stroke-width="0.9"/></svg>
<style>.cm{position:absolute;white-space:nowrap;color:#bdbdbd;font-size:10px;line-height:10px;font-family:"Liberation Serif",serif}.cm i{display:inline-block;width:4.42px;text-align:center;font-style:normal}.cm i.u{transform:scaleX(.8)}</style>
<div class="a" style="left:687px;top:677px;width:538px;height:268px;overflow:hidden">
<div class="cm" style="left:9px;top:0.10px"><i class="u">T</i><i class="u">C</i><i class="u">P</i></div>
<div class="cm" style="left:41px;top:0.10px"><i>0</i><i>.</i><i>0</i><i>.</i><i>0</i><i>.</i><i>0</i><i>:</i><i>7</i><i>0</i><i>0</i><i>0</i></div>
<div class="cm" style="left:144px;top:0.10px"><i>0</i><i>.</i><i>0</i><i>.</i><i>0</i><i>.</i><i>0</i><i>:</i><i>0</i></div>
<div class="cm" style="left:247px;top:0.10px"><i class="u">L</i><i>I</i><i class="u">S</i><i class="u">T</i><i class="u">E</i><i class="u">N</i><i>I</i><i class="u">N</i><i class="u">G</i></div>
<div class="cm" style="left:319px;top:0.10px"><i>1</i><i>3</i><i>1</i><i>4</i><i>8</i></div>
<div class="cm" style="left:9px;top:9.05px"><i class="u">T</i><i class="u">C</i><i class="u">P</i></div>
<div class="cm" style="left:41px;top:9.05px"><i>0</i><i>.</i><i>0</i><i>.</i><i>0</i><i>.</i><i>0</i><i>:</i><i>8</i><i>0</i><i>0</i><i>0</i></div>
<div class="cm" style="left:144px;top:9.05px"><i>0</i><i>.</i><i>0</i><i>.</i><i>0</i><i>.</i><i>0</i><i>:</i><i>0</i></div>
<div class="cm" style="left:247px;top:9.05px"><i class="u">L</i><i>I</i><i class="u">S</i><i class="u">T</i><i class="u">E</i><i class="u">N</i><i>I</i><i class="u">N</i><i class="u">G</i></div>
<div class="cm" style="left:319px;top:9.05px"><i>6</i><i>5</i><i>2</i><i>0</i></div>
<div class="cm" style="left:9px;top:18.00px"><i class="u">T</i><i class="u">C</i><i class="u">P</i></div>
<div class="cm" style="left:41px;top:18.00px"><i>1</i><i>1</i><i>3</i><i>.</i><i>5</i><i>4</i><i>.</i><i>2</i><i>1</i><i>8</i><i>.</i><i>1</i><i>0</i><i>6</i><i>:</i><i>1</i><i>3</i><i>9</i></div>
<div class="cm" style="left:144px;top:18.00px"><i>0</i><i>.</i><i>0</i><i>.</i><i>0</i><i>.</i><i>0</i><i>:</i><i>0</i></div>
<div class="cm" style="left:247px;top:18.00px"><i class="u">L</i><i>I</i><i class="u">S</i><i class="u">T</i><i class="u">E</i><i class="u">N</i><i>I</i><i class="u">N</i><i class="u">G</i></div>
<div class="cm" style="left:319px;top:18.00px"><i>4</i></div>
<div class="cm" style="left:9px;top:26.95px"><i class="u">T</i><i class="u">C</i><i class="u">P</i></div>
<div class="cm" style="left:41px;top:26.95px"><i>1</i><i>1</i><i>3</i><i>.</i><i>5</i><i>4</i><i>.</i><i>2</i><i>1</i><i>8</i><i>.</i><i>1</i><i>0</i><i>6</i><i>:</i><i>1</i><i>5</i><i>5</i><i>1</i></div>
<div class="cm" style="left:144px;top:26.95px"><i>1</i><i>1</i><i>1</i><i>.</i><i>2</i><i>2</i><i>1</i><i>.</i><i>2</i><i>9</i><i>.</i><i>1</i><i>5</i><i>6</i><i>:</i><i>4</i><i>4</i><i>3</i></div>
<div class="cm" style="left:247px;top:26.95px"><i class="u">E</i><i class="u">S</i><i class="u">T</i><i class="u">A</i><i class="u">B</i><i class="u">L</i><i>I</i><i class="u">S</i><i class="u">H</i><i class="u">E</i><i class="u">D</i></div>
<div class="cm" style="left:319px;top:26.95px"><i>3</i><i>2</i><i>2</i><i>8</i></div>
<div class="cm" style="left:9px;top:35.90px"><i class="u">T</i><i class="u">C</i><i class="u">P</i></div>
<div class="cm" style="left:41px;top:35.90px"><i>1</i><i>1</i><i>3</i><i>.</i><i>5</i><i>4</i><i>.</i><i>2</i><i>1</i><i>8</i><i>.</i><i>1</i><i>0</i><i>6</i><i>:</i><i>1</i><i>6</i><i>1</i><i>8</i></div>
<div class="cm" style="left:144px;top:35.90px"><i>1</i><i>1</i><i>1</i><i>.</i><i>2</i><i>2</i><i>1</i><i>.</i><i>2</i><i>9</i><i>.</i><i>8</i><i>5</i><i>:</i><i>4</i><i>4</i><i>3</i></div>
<div class="cm" style="left:247px;top:35.90px"><i class="u">E</i><i class="u">S</i><i class="u">T</i><i class="u">A</i><i class="u">B</i><i class="u">L</i><i>I</i><i class="u">S</i><i class="u">H</i><i class="u">E</i><i class="u">D</i></div>
<div class="cm" style="left:319px;top:35.90px"><i>1</i><i>1</i><i>1</i><i>8</i><i>8</i></div>
<div class="cm" style="left:9px;top:44.85px"><i class="u">T</i><i class="u">C</i><i class="u">P</i></div>
<div class="cm" style="left:41px;top:44.85px"><i>1</i><i>1</i><i>3</i><i>.</i><i>5</i><i>4</i><i>.</i><i>2</i><i>1</i><i>8</i><i>.</i><i>1</i><i>0</i><i>6</i><i>:</i><i>1</i><i>7</i><i>0</i><i>2</i></div>
<div class="cm" style="left:144px;top:44.85px"><i>1</i><i>8</i><i>2</i><i>.</i><i>2</i><i>5</i><i>4</i><i>.</i><i>3</i><i>4</i><i>.</i><i>7</i><i>7</i><i>:</i><i>8</i><i>0</i></div>
<div class="cm" style="left:247px;top:44.85px"><i class="u">C</i><i class="u">L</i><i class="u">O</i><i class="u">S</i><i class="u">E</i><i>_</i><i class="u">W</i><i class="u">A</i><i>I</i><i class="u">T</i></div>
<div class="cm" style="left:319px;top:44.85px"><i>1</i><i>0</i><i>8</i><i>3</i><i>2</i></div>
<div class="cm" style="left:9px;top:53.80px"><i class="u">T</i><i class="u">C</i><i class="u">P</i></div>
<div class="cm" style="left:41px;top:53.80px"><i>1</i><i>1</i><i>3</i><i>.</i><i>5</i><i>4</i><i>.</i><i>2</i><i>1</i><i>8</i><i>.</i><i>1</i><i>0</i><i>6</i><i>:</i><i>1</i><i>8</i><i>6</i><i>9</i></div>
<div class="cm" style="left:144px;top:53.80px"><i>2</i><i>2</i><i>3</i><i>.</i><i>1</i><i>6</i><i>7</i><i>.</i><i>8</i><i>6</i><i>.</i><i>4</i><i>2</i><i>:</i><i>8</i><i>0</i></div>
<div class="cm" style="left:247px;top:53.80px"><i class="u">C</i><i class="u">L</i><i class="u">O</i><i class="u">S</i><i class="u">E</i><i>_</i><i class="u">W</i><i class="u">A</i><i>I</i><i class="u">T</i></div>
<div class="cm" style="left:319px;top:53.80px"><i>1</i><i>0</i><i>8</i><i>3</i><i>2</i></div>
<div class="cm" style="left:9px;top:62.75px"><i class="u">T</i><i class="u">C</i><i class="u">P</i></div>
<div class="cm" style="left:41px;top:62.75px"><i>1</i><i>1</i><i>3</i><i>.</i><i>5</i><i>4</i><i>.</i><i>2</i><i>1</i><i>8</i><i>.</i><i>1</i><i>0</i><i>6</i><i>:</i><i>1</i><i>8</i><i>7</i><i>3</i></div>
<div class="cm" style="left:144px;top:62.75px"><i>1</i><i>8</i><i>2</i><i>.</i><i>2</i><i>5</i><i>4</i><i>.</i><i>7</i><i>6</i><i>.</i><i>1</i><i>0</i><i>4</i><i>:</i><i>8</i><i>0</i></div>
<div class="cm" style="left:247px;top:62.75px"><i class="u">C</i><i class="u">L</i><i class="u">O</i><i class="u">S</i><i class="u">E</i><i>_</i><i class="u">W</i><i class="u">A</i><i>I</i><i class="u">T</i></div>
<div class="cm" style="left:319px;top:62.75px"><i>1</i><i>0</i><i>8</i><i>3</i><i>2</i></div>
<div class="cm" style="left:9px;top:71.70px"><i class="u">T</i><i class="u">C</i><i class="u">P</i></div>
<div class="cm" style="left:41px;top:71.70px"><i>1</i><i>1</i><i>3</i><i>.</i><i>5</i><i>4</i><i>.</i><i>2</i><i>1</i><i>8</i><i>.</i><i>1</i><i>0</i><i>6</i><i>:</i><i>1</i><i>9</i><i>1</i><i>4</i></div>
<div class="cm" style="left:144px;top:71.70px"><i>4</i><i>2</i><i>.</i><i>6</i><i>2</i><i>.</i><i>5</i><i>9</i><i>.</i><i>1</i><i>9</i><i>5</i><i>:</i><i>8</i><i>0</i></div>
<div class="cm" style="left:247px;top:71.70px"><i class="u">E</i><i class="u">S</i><i class="u">T</i><i class="u">A</i><i class="u">B</i><i class="u">L</i><i>I</i><i class="u">S</i><i class="u">H</i><i class="u">E</i><i class="u">D</i></div>
<div class="cm" style="left:319px;top:71.70px"><i>6</i><i>5</i><i>2</i><i>0</i></div>
<div class="cm" style="left:9px;top:80.65px"><i class="u">T</i><i class="u">C</i><i class="u">P</i></div>
<div class="cm" style="left:41px;top:80.65px"><i>1</i><i>1</i><i>3</i><i>.</i><i>5</i><i>4</i><i>.</i><i>2</i><i>1</i><i>8</i><i>.</i><i>1</i><i>0</i><i>6</i><i>:</i><i>1</i><i>9</i><i>7</i><i>3</i></div>
<div class="cm" style="left:144px;top:80.65px"><i>1</i><i>4</i><i>.</i><i>1</i><i>8</i><i>.</i><i>2</i><i>3</i><i>4</i><i>.</i><i>2</i><i>5</i><i>4</i><i>:</i><i>8</i><i>0</i></div>
<div class="cm" style="left:247px;top:80.65px"><i class="u">E</i><i class="u">S</i><i class="u">T</i><i class="u">A</i><i class="u">B</i><i class="u">L</i><i>I</i><i class="u">S</i><i class="u">H</i><i class="u">E</i><i class="u">D</i></div>
<div class="cm" style="left:319px;top:80.65px"><i>6</i><i>5</i><i>2</i><i>0</i></div>
<div class="cm" style="left:9px;top:89.60px"><i class="u">T</i><i class="u">C</i><i class="u">P</i></div>
<div class="cm" style="left:41px;top:89.60px"><i>1</i><i>1</i><i>3</i><i>.</i><i>5</i><i>4</i><i>.</i><i>2</i><i>1</i><i>8</i><i>.</i><i>1</i><i>0</i><i>6</i><i>:</i><i>5</i><i>0</i><i>4</i><i>0</i></div>
<div class="cm" style="left:144px;top:89.60px"><i>0</i><i>.</i><i>0</i><i>.</i><i>0</i><i>.</i><i>0</i><i>:</i><i>0</i></div>
<div class="cm" style="left:247px;top:89.60px"><i class="u">L</i><i>I</i><i class="u">S</i><i class="u">T</i><i class="u">E</i><i class="u">N</i><i>I</i><i class="u">N</i><i class="u">G</i></div>
<div class="cm" style="left:319px;top:89.60px"><i>7</i><i>6</i><i>8</i><i>4</i></div>
<div class="cm" style="left:9px;top:98.55px"><i class="u">T</i><i class="u">C</i><i class="u">P</i></div>
<div class="cm" style="left:41px;top:98.55px"><i>1</i><i>2</i><i>7</i><i>.</i><i>0</i><i>.</i><i>0</i><i>.</i><i>1</i><i>:</i><i>1</i><i>8</i><i>9</i><i>0</i></div>
<div class="cm" style="left:144px;top:98.55px"><i>1</i><i>2</i><i>7</i><i>.</i><i>0</i><i>.</i><i>0</i><i>.</i><i>1</i><i>:</i><i>1</i><i>8</i><i>9</i><i>1</i></div>
<div class="cm" style="left:247px;top:98.55px"><i class="u">E</i><i class="u">S</i><i class="u">T</i><i class="u">A</i><i class="u">B</i><i class="u">L</i><i>I</i><i class="u">S</i><i class="u">H</i><i class="u">E</i><i class="u">D</i></div>
<div class="cm" style="left:319px;top:98.55px"><i>1</i><i>3</i><i>1</i><i>4</i><i>8</i></div>
<div class="cm" style="left:9px;top:107.50px"><i class="u">T</i><i class="u">C</i><i class="u">P</i></div>
<div class="cm" style="left:41px;top:107.50px"><i>1</i><i>2</i><i>7</i><i>.</i><i>0</i><i>.</i><i>0</i><i>.</i><i>1</i><i>:</i><i>1</i><i>8</i><i>9</i><i>1</i></div>
<div class="cm" style="left:144px;top:107.50px"><i>1</i><i>2</i><i>7</i><i>.</i><i>0</i><i>.</i><i>0</i><i>.</i><i>1</i><i>:</i><i>1</i><i>8</i><i>9</i><i>0</i></div>
<div class="cm" style="left:247px;top:107.50px"><i class="u">E</i><i class="u">S</i><i class="u">T</i><i class="u">A</i><i class="u">B</i><i class="u">L</i><i>I</i><i class="u">S</i><i class="u">H</i><i class="u">E</i><i class="u">D</i></div>
<div class="cm" style="left:319px;top:107.50px"><i>1</i><i>3</i><i>1</i><i>4</i><i>8</i></div>
<div class="cm" style="left:9px;top:116.45px"><i class="u">T</i><i class="u">C</i><i class="u">P</i></div>
<div class="cm" style="left:41px;top:116.45px"><i>1</i><i>2</i><i>7</i><i>.</i><i>0</i><i>.</i><i>0</i><i>.</i><i>1</i><i>:</i><i>1</i><i>8</i><i>9</i><i>2</i></div>
<div class="cm" style="left:144px;top:116.45px"><i>1</i><i>2</i><i>7</i><i>.</i><i>0</i><i>.</i><i>0</i><i>.</i><i>1</i><i>:</i><i>1</i><i>8</i><i>9</i><i>3</i></div>
<div class="cm" style="left:247px;top:116.45px"><i class="u">E</i><i class="u">S</i><i class="u">T</i><i class="u">A</i><i class="u">B</i><i class="u">L</i><i>I</i><i class="u">S</i><i class="u">H</i><i class="u">E</i><i class="u">D</i></div>
<div class="cm" style="left:319px;top:116.45px"><i>1</i><i>3</i><i>1</i><i>4</i><i>8</i></div>
<div class="cm" style="left:9px;top:125.40px"><i class="u">T</i><i class="u">C</i><i class="u">P</i></div>
<div class="cm" style="left:41px;top:125.40px"><i>1</i><i>2</i><i>7</i><i>.</i><i>0</i><i>.</i><i>0</i><i>.</i><i>1</i><i>:</i><i>1</i><i>8</i><i>9</i><i>3</i></div>
<div class="cm" style="left:144px;top:125.40px"><i>1</i><i>2</i><i>7</i><i>.</i><i>0</i><i>.</i><i>0</i><i>.</i><i>1</i><i>:</i><i>1</i><i>8</i><i>9</i><i>2</i></div>
<div class="cm" style="left:247px;top:125.40px"><i class="u">E</i><i class="u">S</i><i class="u">T</i><i class="u">A</i><i class="u">B</i><i class="u">L</i><i>I</i><i class="u">S</i><i class="u">H</i><i class="u">E</i><i class="u">D</i></div>
<div class="cm" style="left:319px;top:125.40px"><i>1</i><i>3</i><i>1</i><i>4</i><i>8</i></div>
<div class="cm" style="left:9px;top:134.35px"><i class="u">T</i><i class="u">C</i><i class="u">P</i></div>
<div class="cm" style="left:41px;top:134.35px"><i>1</i><i>2</i><i>7</i><i>.</i><i>0</i><i>.</i><i>0</i><i>.</i><i>1</i><i>:</i><i>1</i><i>9</i><i>7</i><i>4</i></div>
<div class="cm" style="left:144px;top:134.35px"><i>1</i><i>2</i><i>7</i><i>.</i><i>0</i><i>.</i><i>0</i><i>.</i><i>1</i><i>:</i><i>1</i><i>9</i><i>7</i><i>5</i></div>
<div class="cm" style="left:247px;top:134.35px"><i class="u">E</i><i class="u">S</i><i class="u">T</i><i class="u">A</i><i class="u">B</i><i class="u">L</i><i>I</i><i class="u">S</i><i class="u">H</i><i class="u">E</i><i class="u">D</i></div>
<div class="cm" style="left:319px;top:134.35px"><i>1</i><i>2</i><i>6</i><i>5</i><i>2</i></div>
<div class="cm" style="left:9px;top:143.30px"><i class="u">T</i><i class="u">C</i><i class="u">P</i></div>
<div class="cm" style="left:41px;top:143.30px"><i>1</i><i>2</i><i>7</i><i>.</i><i>0</i><i>.</i><i>0</i><i>.</i><i>1</i><i>:</i><i>1</i><i>9</i><i>7</i><i>5</i></div>
<div class="cm" style="left:144px;top:143.30px"><i>1</i><i>2</i><i>7</i><i>.</i><i>0</i><i>.</i><i>0</i><i>.</i><i>1</i><i>:</i><i>1</i><i>9</i><i>7</i><i>4</i></div>
<div class="cm" style="left:247px;top:143.30px"><i class="u">E</i><i class="u">S</i><i class="u">T</i><i class="u">A</i><i class="u">B</i><i class="u">L</i><i>I</i><i class="u">S</i><i class="u">H</i><i class="u">E</i><i class="u">D</i></div>
<div class="cm" style="left:319px;top:143.30px"><i>1</i><i>2</i><i>6</i><i>5</i><i>2</i></div>
<div class="cm" style="left:9px;top:152.25px"><i class="u">T</i><i class="u">C</i><i class="u">P</i></div>
<div class="cm" style="left:41px;top:152.25px"><i>1</i><i>2</i><i>7</i><i>.</i><i>0</i><i>.</i><i>0</i><i>.</i><i>1</i><i>:</i><i>1</i><i>9</i><i>7</i><i>6</i></div>
<div class="cm" style="left:144px;top:152.25px"><i>1</i><i>2</i><i>7</i><i>.</i><i>0</i><i>.</i><i>0</i><i>.</i><i>1</i><i>:</i><i>1</i><i>9</i><i>7</i><i>7</i></div>
<div class="cm" style="left:247px;top:152.25px"><i class="u">E</i><i class="u">S</i><i class="u">T</i><i class="u">A</i><i class="u">B</i><i class="u">L</i><i>I</i><i class="u">S</i><i class="u">H</i><i class="u">E</i><i class="u">D</i></div>
<div class="cm" style="left:319px;top:152.25px"><i>1</i><i>2</i><i>6</i><i>5</i><i>2</i></div>
<div class="cm" style="left:9px;top:161.20px"><i class="u">T</i><i class="u">C</i><i class="u">P</i></div>
<div class="cm" style="left:41px;top:161.20px"><i>1</i><i>2</i><i>7</i><i>.</i><i>0</i><i>.</i><i>0</i><i>.</i><i>1</i><i>:</i><i>1</i><i>9</i><i>7</i><i>7</i></div>
<div class="cm" style="left:144px;top:161.20px"><i>1</i><i>2</i><i>7</i><i>.</i><i>0</i><i>.</i><i>0</i><i>.</i><i>1</i><i>:</i><i>1</i><i>9</i><i>7</i><i>6</i></div>
<div class="cm" style="left:247px;top:161.20px"><i class="u">E</i><i class="u">S</i><i class="u">T</i><i class="u">A</i><i class="u">B</i><i class="u">L</i><i>I</i><i class="u">S</i><i class="u">H</i><i class="u">E</i><i class="u">D</i></div>
<div class="cm" style="left:319px;top:161.20px"><i>1</i><i>2</i><i>6</i><i>5</i><i>2</i></div>
<div class="cm" style="left:9px;top:170.15px"><i class="u">T</i><i class="u">C</i><i class="u">P</i></div>
<div class="cm" style="left:41px;top:170.15px"><i>1</i><i>2</i><i>7</i><i>.</i><i>0</i><i>.</i><i>0</i><i>.</i><i>1</i><i>:</i><i>4</i><i>3</i><i>0</i><i>0</i></div>
<div class="cm" style="left:144px;top:170.15px"><i>0</i><i>.</i><i>0</i><i>.</i><i>0</i><i>.</i><i>0</i><i>:</i><i>0</i></div>
<div class="cm" style="left:247px;top:170.15px"><i class="u">L</i><i>I</i><i class="u">S</i><i class="u">T</i><i class="u">E</i><i class="u">N</i><i>I</i><i class="u">N</i><i class="u">G</i></div>
<div class="cm" style="left:319px;top:170.15px"><i>1</i><i>0</i><i>8</i><i>3</i><i>2</i></div>
<div class="cm" style="left:9px;top:179.10px"><i class="u">T</i><i class="u">C</i><i class="u">P</i></div>
<div class="cm" style="left:41px;top:179.10px"><i>1</i><i>2</i><i>7</i><i>.</i><i>0</i><i>.</i><i>0</i><i>.</i><i>1</i><i>:</i><i>4</i><i>3</i><i>0</i><i>1</i></div>
<div class="cm" style="left:144px;top:179.10px"><i>0</i><i>.</i><i>0</i><i>.</i><i>0</i><i>.</i><i>0</i><i>:</i><i>0</i></div>
<div class="cm" style="left:247px;top:179.10px"><i class="u">L</i><i>I</i><i class="u">S</i><i class="u">T</i><i class="u">E</i><i class="u">N</i><i>I</i><i class="u">N</i><i class="u">G</i></div>
<div class="cm" style="left:319px;top:179.10px"><i>1</i><i>0</i><i>8</i><i>3</i><i>2</i></div>
<div class="cm" style="left:9px;top:188.05px"><i class="u">T</i><i class="u">C</i><i class="u">P</i></div>
<div class="cm" style="left:41px;top:188.05px"><i>1</i><i>2</i><i>7</i><i>.</i><i>0</i><i>.</i><i>0</i><i>.</i><i>1</i><i>:</i><i>5</i><i>0</i><i>3</i><i>7</i></div>
<div class="cm" style="left:144px;top:188.05px"><i>0</i><i>.</i><i>0</i><i>.</i><i>0</i><i>.</i><i>0</i><i>:</i><i>0</i></div>
<div class="cm" style="left:247px;top:188.05px"><i class="u">L</i><i>I</i><i class="u">S</i><i class="u">T</i><i class="u">E</i><i class="u">N</i><i>I</i><i class="u">N</i><i class="u">G</i></div>
<div class="cm" style="left:319px;top:188.05px"><i>1</i><i>3</i><i>1</i><i>1</i><i>2</i></div>
<div class="cm" style="left:9px;top:197.00px"><i class="u">T</i><i class="u">C</i><i class="u">P</i></div>
<div class="cm" style="left:41px;top:197.00px"><i>1</i><i>2</i><i>7</i><i>.</i><i>0</i><i>.</i><i>0</i><i>.</i><i>1</i><i>:</i><i>5</i><i>3</i><i>5</i><i>4</i></div>
<div class="cm" style="left:144px;top:197.00px"><i>0</i><i>.</i><i>0</i><i>.</i><i>0</i><i>.</i><i>0</i><i>:</i><i>0</i></div>
<div class="cm" style="left:247px;top:197.00px"><i class="u">L</i><i>I</i><i class="u">S</i><i class="u">T</i><i class="u">E</i><i class="u">N</i><i>I</i><i class="u">N</i><i class="u">G</i></div>
<div class="cm" style="left:319px;top:197.00px"><i>3</i><i>6</i><i>6</i><i>0</i></div>
<div class="cm" style="left:9px;top:205.95px"><i class="u">T</i><i class="u">C</i><i class="u">P</i></div>
<div class="cm" style="left:41px;top:205.95px"><i>1</i><i>2</i><i>7</i><i>.</i><i>0</i><i>.</i><i>0</i><i>.</i><i>1</i><i>:</i><i>5</i><i>9</i><i>3</i><i>9</i></div>
<div class="cm" style="left:144px;top:205.95px"><i>0</i><i>.</i><i>0</i><i>.</i><i>0</i><i>.</i><i>0</i><i>:</i><i>0</i></div>
<div class="cm" style="left:247px;top:205.95px"><i class="u">L</i><i>I</i><i class="u">S</i><i class="u">T</i><i class="u">E</i><i class="u">N</i><i>I</i><i class="u">N</i><i class="u">G</i></div>
<div class="cm" style="left:319px;top:205.95px"><i>3</i><i>1</i><i>8</i><i>4</i></div>
<div class="cm" style="left:9px;top:214.90px"><i class="u">T</i><i class="u">C</i><i class="u">P</i></div>
<div class="cm" style="left:41px;top:214.90px"><i>1</i><i>2</i><i>7</i><i>.</i><i>0</i><i>.</i><i>0</i><i>.</i><i>1</i><i>:</i><i>9</i><i>9</i><i>9</i><i>0</i></div>
<div class="cm" style="left:144px;top:214.90px"><i>0</i><i>.</i><i>0</i><i>.</i><i>0</i><i>.</i><i>0</i><i>:</i><i>0</i></div>
<div class="cm" style="left:247px;top:214.90px"><i class="u">L</i><i>I</i><i class="u">S</i><i class="u">T</i><i class="u">E</i><i class="u">N</i><i>I</i><i class="u">N</i><i class="u">G</i></div>
<div class="cm" style="left:319px;top:214.90px"><i>3</i><i>7</i><i>8</i><i>0</i></div>
<div class="cm" style="left:9px;top:223.85px"><i class="u">T</i><i class="u">C</i><i class="u">P</i></div>
<div class="cm" style="left:41px;top:223.85px"><i>1</i><i>2</i><i>7</i><i>.</i><i>0</i><i>.</i><i>0</i><i>.</i><i>1</i><i>:</i><i>1</i><i>0</i><i>0</i><i>0</i><i>0</i></div>
<div class="cm" style="left:144px;top:223.85px"><i>0</i><i>.</i><i>0</i><i>.</i><i>0</i><i>.</i><i>0</i><i>:</i><i>0</i></div>
<div class="cm" style="left:247px;top:223.85px"><i class="u">L</i><i>I</i><i class="u">S</i><i class="u">T</i><i class="u">E</i><i class="u">N</i><i>I</i><i class="u">N</i><i class="u">G</i></div>
<div class="cm" style="left:319px;top:223.85px"><i>1</i><i>0</i><i>0</i><i>2</i><i>8</i></div>
<div class="cm" style="left:9px;top:232.80px"><i class="u">T</i><i class="u">C</i><i class="u">P</i></div>
<div class="cm" style="left:41px;top:232.80px"><i>1</i><i>2</i><i>7</i><i>.</i><i>0</i><i>.</i><i>0</i><i>.</i><i>1</i><i>:</i><i>3</i><i>1</i><i>7</i><i>5</i><i>2</i></div>
<div class="cm" style="left:144px;top:232.80px"><i>0</i><i>.</i><i>0</i><i>.</i><i>0</i><i>.</i><i>0</i><i>:</i><i>0</i></div>
<div class="cm" style="left:247px;top:232.80px"><i class="u">L</i><i>I</i><i class="u">S</i><i class="u">T</i><i class="u">E</i><i class="u">N</i><i>I</i><i class="u">N</i><i class="u">G</i></div>
<div class="cm" style="left:319px;top:232.80px"><i>1</i><i>2</i><i>0</i><i>1</i><i>2</i></div>
<div class="cm" style="left:9px;top:241.75px"><i class="u">T</i><i class="u">C</i><i class="u">P</i></div>
<div class="cm" style="left:41px;top:241.75px"><i>1</i><i>6</i><i>9</i><i>.</i><i>2</i><i>5</i><i>4</i><i>.</i><i>1</i><i>7</i><i>8</i><i>.</i><i>1</i><i>5</i><i>4</i><i>:</i><i>1</i><i>3</i><i>9</i></div>
<div class="cm" style="left:144px;top:241.75px"><i>0</i><i>.</i><i>0</i><i>.</i><i>0</i><i>.</i><i>0</i><i>:</i><i>0</i></div>
<div class="cm" style="left:247px;top:241.75px"><i class="u">L</i><i>I</i><i class="u">S</i><i class="u">T</i><i class="u">E</i><i class="u">N</i><i>I</i><i class="u">N</i><i class="u">G</i></div>
<div class="cm" style="left:319px;top:241.75px"><i>4</i></div>
<div class="cm" style="left:9px;top:250.70px"><i class="u">T</i><i class="u">C</i><i class="u">P</i></div>
<div class="cm" style="left:41px;top:250.70px"><i>1</i><i>6</i><i>9</i><i>.</i><i>2</i><i>5</i><i>4</i><i>.</i><i>1</i><i>7</i><i>8</i><i>.</i><i>1</i><i>5</i><i>4</i><i>:</i><i>5</i><i>0</i><i>4</i><i>0</i></div>
<div class="cm" style="left:144px;top:250.70px"><i>0</i><i>.</i><i>0</i><i>.</i><i>0</i><i>.</i><i>0</i><i>:</i><i>0</i></div>
<div class="cm" style="left:247px;top:250.70px"><i class="u">L</i><i>I</i><i class="u">S</i><i class="u">T</i><i class="u">E</i><i class="u">N</i><i>I</i><i class="u">N</i><i class="u">G</i></div>
<div class="cm" style="left:319px;top:250.70px"><i>7</i><i>6</i><i>8</i><i>4</i></div>
<div class="cm" style="left:9px;top:259.65px"><i class="u">T</i><i class="u">C</i><i class="u">P</i></div>
<div class="cm" style="left:41px;top:259.65px"><i>1</i><i>9</i><i>2</i><i>.</i><i>1</i><i>6</i><i>8</i><i>.</i><i>1</i><i>0</i><i>0</i><i>.</i><i>1</i><i>9</i><i>:</i><i>1</i><i>3</i><i>9</i></div>
<div class="cm" style="left:144px;top:259.65px"><i>0</i><i>.</i><i>0</i><i>.</i><i>0</i><i>.</i><i>0</i><i>:</i><i>0</i></div>
<div class="cm" style="left:247px;top:259.65px"><i class="u">L</i><i>I</i><i class="u">S</i><i class="u">T</i><i class="u">E</i><i class="u">N</i><i>I</i><i class="u">N</i><i class="u">G</i></div>
<div class="cm" style="left:319px;top:259.65px"><i>4</i></div>
</div>
<div class="a" style="left:1006px;top:900px;width:27px;height:10px;background:#fff"></div>
<div class="cm" style="left:1006px;top:900.3px;color:#3a3a3a"><i>1</i><i>0</i><i>0</i><i>2</i><i>8</i></div>
<div class="a" style="left:691.5px;top:898.5px;width:344.5px;height:13.5px;border:2px solid #e8262a"></div>
<div class="a" style="left:1072px;top:874.0px;font-size:13.5px;line-height:19px;color:#e8262a;">PID</div>
<svg style="left:1036px;top:885px" width="38" height="20" viewBox="0 0 38 20"><path d="M35 1.3L10 13.5L11 15.5Z" fill="#e8262a" stroke="#e8262a" stroke-width="1"/><path d="M1 18L7.6 11.3L11 17.2Z" fill="#e8262a" stroke="#e8262a" stroke-width="0.8" stroke-linejoin="round"/></svg>
<div class="a" style="left:0px;top:131px;width:1314px;height:5px;background:linear-gradient(rgba(0,0,0,0.075),rgba(0,0,0,0.05) 1.5px,rgba(0,0,0,0.015) 3.5px,rgba(0,0,0,0))"></div>
</body></html>
